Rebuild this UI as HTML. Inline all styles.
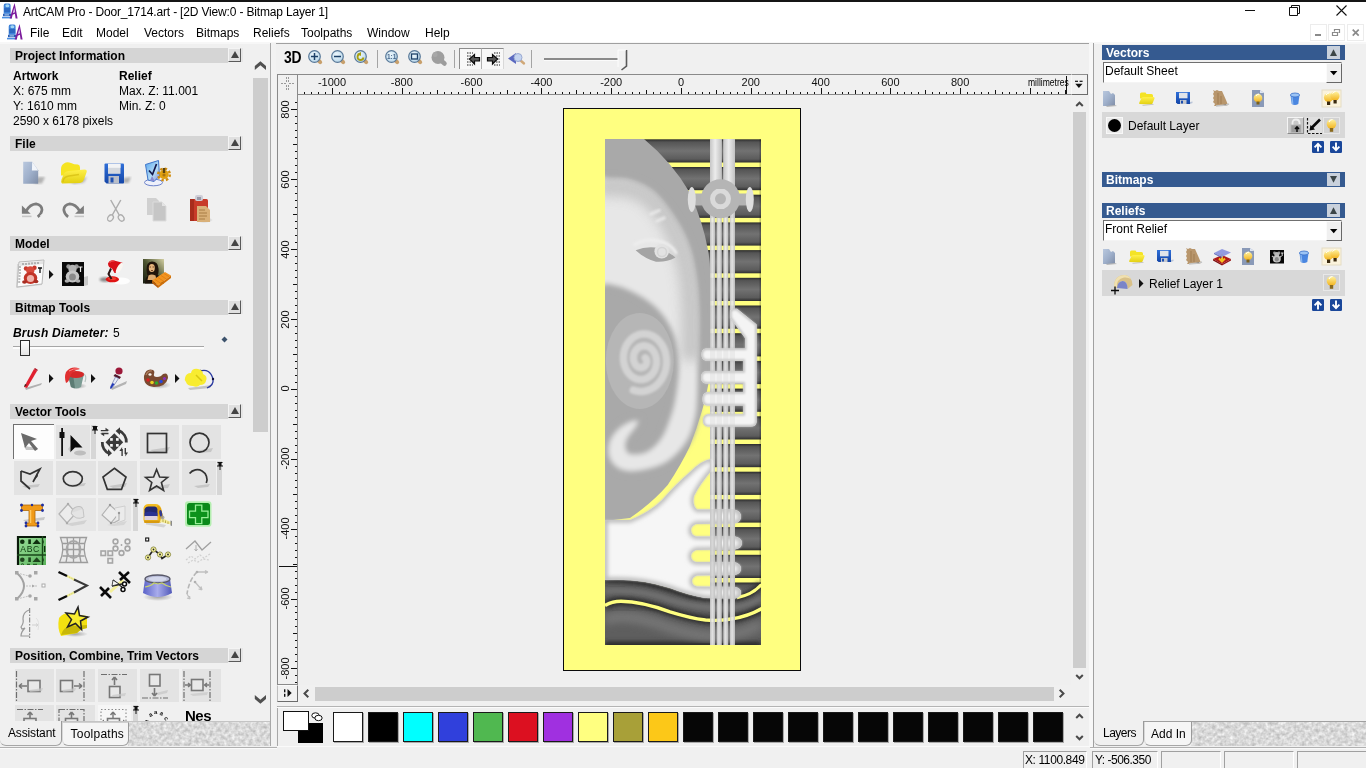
<!DOCTYPE html>
<html><head><meta charset="utf-8"><title>ArtCAM Pro</title>
<style>
*{box-sizing:border-box;margin:0;padding:0}
html,body{width:1366px;height:768px;overflow:hidden;background:#f0f0f0;font-family:"Liberation Sans",sans-serif;font-size:12px;color:#000}
.a{position:absolute}
.t{position:absolute;white-space:nowrap;line-height:14px}
.b{font-weight:bold}
.hd{position:absolute;left:10px;width:218px;height:15px;background:#d5d5d5}
.hd span{position:absolute;left:5px;top:1px;line-height:15px;font-weight:bold;font-size:12px;white-space:nowrap}
.hb{position:absolute;left:228px;width:13px;height:14px;background:#e0e0e0;border-right:1.5px solid #5a5a5a;border-bottom:1.5px solid #5a5a5a;border-top:1px solid #f4f4f4;border-left:1px solid #f4f4f4;box-shadow:2px 0 0 #e6e6e6}
.hb:after{content:"";position:absolute;left:1.5px;top:2px;border-left:4px solid transparent;border-right:4px solid transparent;border-bottom:7px solid #444}
.rh{position:absolute;left:1102px;width:243px;height:15px;background:#355a90}
.rh span{position:absolute;left:4px;top:1px;line-height:15px;font-weight:bold;color:#fff;white-space:nowrap}
.rb{position:absolute;left:1327px;width:13px;height:13px;background:#c9d1dc}
.sw{position:absolute;top:712px;width:30px;height:30px;border:1px solid #1a1a1a;box-shadow:1px 1px 0 #aaa}
.m{position:absolute;top:0}
svg{position:absolute;overflow:visible}
.rl{position:absolute;font-size:11px;line-height:11px;white-space:nowrap;color:#111}
#root{position:absolute;left:0;top:0;width:1366px;height:768px;will-change:transform;overflow:hidden}
</style></head><body><div id="root">
<!-- top strip, title, menu -->
<div class="a" style="left:0;top:0;width:1366px;height:2px;background:#151515"></div>
<div class="a" style="left:0;top:2px;width:1366px;height:40px;background:#fff"></div>
<div class="t" id="title" style="left:23px;top:5px;font-size:12px;letter-spacing:-0.17px">ArtCAM Pro - Door_1714.art - [2D View:0 - Bitmap Layer 1]</div>
<div class="t" style="left:0;top:26px;font-size:12px" id="menu"><span class="m" style="left:30px">File</span><span class="m" style="left:62px">Edit</span><span class="m" style="left:96px">Model</span><span class="m" style="left:144px">Vectors</span><span class="m" style="left:196px">Bitmaps</span><span class="m" style="left:253px">Reliefs</span><span class="m" style="left:301px">Toolpaths</span><span class="m" style="left:367px">Window</span><span class="m" style="left:425px">Help</span></div>
<div class="a" style="left:0;top:42px;width:1366px;height:2px;background:#f7f7f7"></div>
<svg width="0" height="0"><defs><g id="appico"><path d="M3.300 0.500h3.700q1.600 0 1.600 2v8.300H1.700V2.500q0-2 1.600-2z" fill="#3c82d8"/><path d="M2.200 5h6v4h-6z" fill="#2c68c0"/><ellipse cx="5.400" cy="2.800" rx="2" ry="1.500" fill="#a4d8f4"/><rect x="1" y="10.800" width="8" height="2.400" fill="#2a5cb4"/><rect x="2.500" y="11.300" width="4.500" height="1.200" fill="#9cc4ec"/><rect x="0" y="13.800" width="10" height="1.600" fill="#4a8ee0"/><path d="M12.600 0L15.600 15.600H13.600L12.900 10.800 10.700 11.800 9.700 15.600H7.600z" fill="#7c1c9c"/><path d="M12.300 4.500l.5 4.800-1.700.8z" fill="#fff"/></g></defs></svg>
<svg style="left:2px;top:3px" width="16" height="16"><g><path d="M3.300 0.500h3.700q1.600 0 1.600 2v8.300H1.700V2.500q0-2 1.600-2z" fill="#3c82d8"/><path d="M2.200 5h6v4h-6z" fill="#2c68c0"/><ellipse cx="5.400" cy="2.800" rx="2" ry="1.500" fill="#a4d8f4"/><rect x="1" y="10.800" width="8" height="2.400" fill="#2a5cb4"/><rect x="2.500" y="11.300" width="4.500" height="1.200" fill="#9cc4ec"/><rect x="0" y="13.800" width="10" height="1.600" fill="#4a8ee0"/><path d="M12.600 0L15.600 15.600H13.600L12.900 10.800 10.700 11.800 9.700 15.600H7.600z" fill="#7c1c9c"/><path d="M12.300 4.500l.5 4.800-1.700.8z" fill="#fff"/></g></svg>
<svg style="left:7px;top:24px" width="16" height="16"><g><path d="M3.300 0.500h3.700q1.600 0 1.600 2v8.300H1.700V2.500q0-2 1.600-2z" fill="#3c82d8"/><path d="M2.200 5h6v4h-6z" fill="#2c68c0"/><ellipse cx="5.400" cy="2.800" rx="2" ry="1.500" fill="#a4d8f4"/><rect x="1" y="10.800" width="8" height="2.400" fill="#2a5cb4"/><rect x="2.500" y="11.300" width="4.500" height="1.200" fill="#9cc4ec"/><rect x="0" y="13.800" width="10" height="1.600" fill="#4a8ee0"/><path d="M12.600 0L15.600 15.600H13.600L12.900 10.800 10.700 11.800 9.700 15.600H7.600z" fill="#7c1c9c"/><path d="M12.300 4.500l.5 4.800-1.700.8z" fill="#fff"/></g></svg>
<!-- LEFT PANEL -->
<div class="a" style="left:270px;top:43px;width:1px;height:703px;background:#a8a8a8"></div>
<div class="a" style="left:271px;top:43px;width:5px;height:703px;background:#f2f2f2"></div>
<div class="a" style="left:253px;top:78px;width:15px;height:354px;background:#cdcdcd"></div>
<div class="hd" style="top:48px"><span>Project Information</span></div><div class="hb" style="top:48px"></div>
<div class="hd" style="top:136px"><span>File</span></div><div class="hb" style="top:136px"></div>
<div class="hd" style="top:236px"><span>Model</span></div><div class="hb" style="top:236px"></div>
<div class="hd" style="top:300px"><span>Bitmap Tools</span></div><div class="hb" style="top:300px"></div>
<div class="hd" style="top:404px"><span>Vector Tools</span></div><div class="hb" style="top:404px"></div>
<div class="hd" style="top:648px"><span>Position, Combine, Trim Vectors</span></div><div class="hb" style="top:648px"></div>
<div class="t b" style="left:13px;top:69px">Artwork</div>
<div class="t" style="left:13px;top:84px">X: 675 mm</div>
<div class="t" style="left:13px;top:99px">Y: 1610 mm</div>
<div class="t" style="left:13px;top:114px">2590 x 6178 pixels</div>
<div class="t b" style="left:119px;top:69px">Relief</div>
<div class="t" style="left:119px;top:84px">Max. Z: 11.001</div>
<div class="t" style="left:119px;top:99px">Min. Z: 0</div>
<div class="t b" style="left:13px;top:326px;font-style:italic;letter-spacing:0.15px">Brush Diameter:</div>
<div class="t" style="left:113px;top:326px">5</div>
<svg width="0" height="0"><defs>
<linearGradient id="gDoc" x1="0" y1="0" x2="1" y2="1"><stop offset="0" stop-color="#b9c8de"/><stop offset="0.5" stop-color="#9fb0cb"/><stop offset="1" stop-color="#7f8da6"/></linearGradient>
<linearGradient id="gFold" x1="0" y1="0" x2="0" y2="1"><stop offset="0" stop-color="#fff04a"/><stop offset="1" stop-color="#e2cf10"/></linearGradient>
<linearGradient id="gFlop" x1="0" y1="0" x2="0" y2="1"><stop offset="0" stop-color="#2f6fd8"/><stop offset="1" stop-color="#1446a8"/></linearGradient>
<linearGradient id="gMon" x1="0" y1="0" x2="1" y2="1"><stop offset="0" stop-color="#5aa8ee"/><stop offset="0.6" stop-color="#b6dcf6"/><stop offset="1" stop-color="#8a8ad0"/></linearGradient>
<radialGradient id="gSh"><stop offset="0" stop-color="#000" stop-opacity=".32"/><stop offset="1" stop-color="#000" stop-opacity="0"/></radialGradient>
<linearGradient id="gBulb" x1="0" y1="0" x2="0" y2="1"><stop offset="0" stop-color="#fff3a0"/><stop offset="1" stop-color="#f2b21c"/></linearGradient>
<filter id="fb1"><feGaussianBlur stdDeviation="0.8"/></filter>
</defs></svg>
<!-- new -->
<svg style="left:22px;top:161px" width="24" height="26"><path d="M16 16l7 0-3 6.500-8 0z" fill="#a4a4a4" opacity=".8" filter="url(#fb1)"/><path d="M1.200 0.700h9l6 8.500v13.500h-15z" fill="url(#gDoc)"/><path d="M10.200 0.700l6 8.800h-6.300z" fill="#f2f5fa"/></svg>
<!-- open -->
<svg style="left:60px;top:161px" width="30" height="26"><path d="M10 21l17-5-3 5.500-10 1.500z" fill="#a8a8a8" opacity=".8" filter="url(#fb1)"/><path d="M1 8q0-4 3-5.500q3-2 7-.5q3 1.500 7 1.500q2 .5 2 3v8H1z" fill="#f6e422"/><path d="M2 22.500q-1.500-1-.5-4l2-5q1-3 5-3.500l16-1.500q3 0 2 3l-2.500 7q-1 3-4 3.500z" fill="url(#gFold)"/><path d="M3 21q0-5 6-6l10-1.500" fill="none" stroke="#d4bc10" stroke-width="1.500" opacity=".7"/></svg>
<!-- save -->
<svg style="left:104px;top:163px" width="28" height="24"><path d="M20 15l7-1-2.500 6-6 0z" fill="#a0a0a0" opacity=".8" filter="url(#fb1)"/><path d="M0.500 1.500q0-1 1-1h17.500q1 0 1 1v18q0 1-1 1H2.500l-2-2z" fill="url(#gFlop)"/><rect x="4" y="0.800" width="12.500" height="10" fill="#d4d8de"/><rect x="4" y="0.800" width="12.500" height="4" fill="#f2f3f5"/><rect x="4.500" y="13" width="10.500" height="7.500" fill="#b9bec8"/><rect x="6.500" y="14.500" width="3" height="5" fill="#2050b0"/></svg>
<!-- options (monitor+gear) -->
<svg style="left:143px;top:159px" width="32" height="30"><ellipse cx="10.500" cy="23.500" rx="9" ry="3.300" fill="#eef0fa" stroke="#6a80c8" stroke-width="1"/><path d="M2.500 5.500L15.500 1.500 16.500 17 11 22.500 5 21z" fill="url(#gMon)" stroke="#3f74c8" stroke-width="1"/><path d="M9 17l3 5.500-5-1z" fill="#8888d0"/><path d="M6 11.500l3.500 4L13.500 5" fill="none" stroke="#14184a" stroke-width="1.700"/><circle cx="21" cy="15.500" r="4.600" fill="#e0a010"/><circle cx="21" cy="15.500" r="5.800" fill="none" stroke="#d08c0c" stroke-width="2.400" stroke-dasharray="2.400 2.150"/><path d="M19.800 9h2.400v5h-2.400z" fill="#5a4410"/><circle cx="21" cy="16" r="1.600" fill="#a87410"/></svg>
<!-- undo -->
<svg style="left:20px;top:201px" width="26" height="20"><path d="M1.900 4.400V12.800H10.700z" fill="#7c7c7c"/><path d="M6.500 9.500Q10 3.200 16 2.800Q21.800 3.800 22 8.800Q21.500 13 17.700 15.800" fill="none" stroke="#7c7c7c" stroke-width="2.700"/><path d="M2 15.400h9.500" stroke="#c6c6c6" stroke-width="1.600"/><path d="M20 15l3-3" stroke="#d0d0d0" stroke-width="1"/></svg>
<!-- redo -->
<svg style="left:62px;top:201px" width="26" height="20"><path d="M21.900 4.400V12.800H13.100z" fill="#7c7c7c"/><path d="M17.300 9.500Q13.800 3.200 7.800 2.800Q2 3.800 1.800 8.800Q2.300 13 6.100 15.800" fill="none" stroke="#7c7c7c" stroke-width="2.700"/><path d="M12.500 15.400h9.500" stroke="#c6c6c6" stroke-width="1.600"/></svg>
<!-- cut -->
<svg style="left:105px;top:198px" width="22" height="25"><path d="M5.700 2l8.500 15M15.800 2L7.300 17" stroke="#adadad" stroke-width="1.500" fill="none"/><ellipse cx="5.500" cy="20" rx="2.600" ry="3.400" fill="none" stroke="#adadad" stroke-width="1.300" transform="rotate(35 5.500 20)"/><ellipse cx="16.200" cy="20" rx="2.600" ry="3.400" fill="none" stroke="#adadad" stroke-width="1.300" transform="rotate(-35 16.200 20)"/></svg>
<!-- copy -->
<svg style="left:145px;top:197px" width="27" height="27"><path d="M2 1h9l3 3v14H2z" fill="#d0d0d0"/><path d="M8 5h9l4 4v15H8z" fill="#c6c6c6" stroke="#dcdcdc" stroke-width="1"/><path d="M17 5l4 4h-4z" fill="#e4e4e4"/></svg>
<!-- paste -->
<svg style="left:188px;top:194px" width="26" height="30"><ellipse cx="16" cy="26" rx="9" ry="3" fill="url(#gSh)"/><rect x="2" y="5" width="18" height="22" rx="1.5" fill="#c83a28"/><rect x="2" y="5" width="4" height="22" fill="#a82c1c"/><rect x="7" y="1" width="8" height="6" rx="2" fill="#cfcfd8"/><rect x="9" y="3" width="4" height="3" fill="#9a9aa8"/><path d="M9 12h9l4 4v12H9z" fill="#d9b078"/><path d="M11 16h6M11 19h8M11 22h8M11 25h6" stroke="#a87c44" stroke-width="1"/></svg>
<!-- model: teddy paper -->
<svg style="left:14px;top:258px" width="32" height="31"><path d="M3 6l27-3-2 24-26 3z" fill="#d8d8d8"/><path d="M5 4l25-2-2 24-25 3z" fill="#fbfbfb" stroke="#b8b8b8" stroke-width="1"/><path d="M6 5l23-2v3L6 8z" fill="#e4e4e4"/><path d="M9 5v2M12 5v2M15 4.7v2M18 4.4v2M21 4.2v2M24 4v2" stroke="#666" stroke-width="0.8"/><path d="M5 9l2 0M5 12h2M5 15h2M4.6 18h2M4.4 21h2M4.2 24h2" stroke="#666" stroke-width="0.8"/><circle cx="12" cy="10.5" r="2.2" fill="#c8382c"/><circle cx="20.5" cy="9.8" r="2.2" fill="#c8382c"/><circle cx="16.3" cy="12.5" r="4.2" fill="#d84a3c"/><ellipse cx="16.5" cy="20" rx="6.8" ry="6" fill="#c23428"/><ellipse cx="16.5" cy="20.5" rx="3.6" ry="3.6" fill="#f0b4ac"/><ellipse cx="10.5" cy="24" rx="2.4" ry="1.8" fill="#a82c20"/><ellipse cx="22" cy="23.5" rx="2.4" ry="1.8" fill="#a82c20"/><path d="M24 10h4M26 10v5" stroke="#111" stroke-width="1.3"/></svg>
<svg style="left:49px;top:270px" width="5" height="9"><path d="M0 0l4.5 4.5L0 9z" fill="#111"/></svg>
<!-- grey teddy on black -->
<svg style="left:62px;top:261px" width="26" height="26"><path d="M22 16l4-1v9l-4 1z" fill="#c8c8c8"/><rect x="0" y="1" width="22" height="24" fill="#0a0a0a"/><circle cx="6.5" cy="5.5" r="2.2" fill="#9a9a9a"/><circle cx="14.5" cy="5.5" r="2.2" fill="#9a9a9a"/><circle cx="10.5" cy="8" r="4.2" fill="#b4b4b4"/><ellipse cx="10.5" cy="15.5" rx="6.8" ry="6" fill="#c6c6c6"/><ellipse cx="10.5" cy="16" rx="3.4" ry="3.6" fill="#8a8a8a"/><ellipse cx="5" cy="20" rx="2.4" ry="1.8" fill="#b0b0b0"/><ellipse cx="16" cy="20" rx="2.4" ry="1.8" fill="#b0b0b0"/><path d="M16.5 6h4M18.5 6v5" stroke="#eee" stroke-width="1.2"/></svg>
<!-- lamp -->
<svg style="left:99px;top:259px" width="32" height="28"><ellipse cx="22" cy="22" rx="9" ry="3.500" fill="#fff" opacity=".85"/><ellipse cx="6" cy="20.500" rx="5.500" ry="2.200" fill="#555" filter="url(#fb1)" opacity=".7"/><ellipse cx="13.400" cy="20.300" rx="6.600" ry="3" fill="#e01414"/><ellipse cx="13" cy="19.500" rx="4" ry="1.500" fill="#f04030"/><path d="M12 9.500L9.500 15l3 5" fill="none" stroke="#2a1414" stroke-width="2"/><path d="M9 4.500q2-4 6-3l8.500 2.200-3 6.300q-2.500 4.500-5 4L13 9.500q-4-1-4-5z" fill="#d81018"/><path d="M23.300 3.800q1.500 2-1 6.500-2.500 4.500-5 4-1.500-1.500 1-6t5-4.500z" fill="#fbf6f0"/><path d="M10.500 3.500q2-2 5-1.500" stroke="#f05050" stroke-width="1.200" fill="none"/></svg>
<!-- mona lisa -->
<svg style="left:142px;top:258px" width="30" height="31"><defs><linearGradient id="gMona" x1="0" y1="1" x2="1" y2="0"><stop offset="0" stop-color="#181c10"/><stop offset=".5" stop-color="#4c5430"/><stop offset="1" stop-color="#d4d0a4"/></linearGradient></defs><rect x="1" y="1" width="21" height="24.500" fill="url(#gMona)"/><path d="M3 25.500q0-7 5-9.500h6q5 2 6 9.500z" fill="#1c140c"/><path d="M4.500 12q-.5-8 5.500-8.500 6 0 6.500 7 .5 5-1.500 7.500h-9q-1.500-2-1.500-6z" fill="#20140a"/><ellipse cx="9.800" cy="10" rx="3" ry="4" fill="#e4b47c"/><path d="M7.500 9h1.500M10.500 9h1.500M9 12.500h2" stroke="#5a3018" stroke-width=".8"/><path d="M6.500 17.500q3-2 7 0l1 4.500h-9z" fill="#dcaa70"/><path d="M10 22.500l13-8.500 6 3.500-13 10z" fill="#f29420"/><path d="M10 22.500l6 5v2.500l-6-5z" fill="#b85c08"/><path d="M16 27.500l13-10v2.500l-13 10z" fill="#d07008"/><path d="M13 21.500l6 4M16 19.500l6 4M19 17.500l6 4M22 15.500l5.500 3.500" stroke="#e07c10" stroke-width=".8"/></svg>
<!-- brush slider -->
<div class="a" style="left:13px;top:346px;width:191px;height:1px;background:#a6a6a6"></div>
<div class="a" style="left:13px;top:347px;width:191px;height:2px;background:#fdfdfd"></div>
<div class="a" style="left:20px;top:340px;width:10px;height:16px;background:linear-gradient(#fff,#e4e4e4);border:1px solid #2c2c2c"></div>
<svg style="left:221px;top:336px" width="7" height="7"><path d="M3.5 0.5l3 3-3 3-3-3z" fill="#3c526c"/></svg>
<!-- pencil -->
<svg style="left:22px;top:367px" width="24" height="24"><path d="M3 21l17-5-1 2-15 5z" fill="#b0b0b0"/><path d="M2 20l10-18 3 2L5 21z" fill="#e02030"/><path d="M2 20l1-3 2 1z" fill="#402018"/><path d="M12 2l1-1 3 2-1 1z" fill="#b01020"/></svg>
<svg style="left:49px;top:374px" width="5" height="9"><path d="M0 0l4.500 4.500L0 9z" fill="#111"/></svg>
<!-- bucket -->
<svg style="left:62px;top:366px" width="26" height="25"><ellipse cx="16" cy="20" rx="9" ry="3" fill="url(#gSh)"/><path d="M6 9l3 12q5 3 10 0l3-13z" fill="#7c9c94"/><path d="M6 9l3 12q2 1 4 1.300L11 8z" fill="#5c7c74"/><ellipse cx="14" cy="8.500" rx="8.200" ry="3.400" fill="#d42828"/><path d="M4 6q6-7 14-3q-8 1-10 8q-1 5-4 6q-2-6 0-11z" fill="#e03030"/><path d="M7 5q5-3 9-2" stroke="#f88" stroke-width="1" fill="none"/><path d="M22 8q3 2 1 8" stroke="#b8c4c0" stroke-width="1.200" fill="none"/></svg>
<svg style="left:91px;top:374px" width="5" height="9"><path d="M0 0l4.500 4.500L0 9z" fill="#111"/></svg>
<!-- dropper -->
<svg style="left:105px;top:366px" width="26" height="26"><path d="M6 22l16-7-1 3-14 6z" fill="#b4b4b4"/><circle cx="14" cy="5" r="3.600" fill="#9c1838"/><path d="M10 8l6 3-1.500 2-6-3z" fill="#50182c"/><path d="M10.500 11l3 1.500-6 9-2 1 .2-2z" fill="#e8ecf8" stroke="#7884b0" stroke-width=".8"/><path d="M7.500 17l2 1-2.800 4-1.500.7.200-1.700z" fill="#2038b8"/></svg>
<!-- palette -->
<svg style="left:142px;top:367px" width="30" height="24"><ellipse cx="17" cy="18" rx="12" ry="4" fill="url(#gSh)"/><path d="M2 9q2-8 9-6q2 1 1 4q-1 3 3 3q4 0 6-3q5-2 5 4q-2 9-14 9q-11-1-10-11z" fill="#7a4a30"/><path d="M4 8q2-5 6-4" stroke="#b08060" stroke-width="1.200" fill="none"/><circle cx="6" cy="13" r="1.800" fill="#d82020"/><circle cx="10" cy="15.500" r="1.800" fill="#e8d020"/><circle cx="14.500" cy="16" r="1.800" fill="#30a830"/><circle cx="19" cy="14.500" r="1.800" fill="#2848d8"/><circle cx="22.500" cy="11.500" r="1.600" fill="#8830c0"/><ellipse cx="8" cy="7.500" rx="1.600" ry="1.200" fill="#f4f0e8"/></svg>
<svg style="left:175px;top:374px" width="5" height="9"><path d="M0 0l4.500 4.500L0 9z" fill="#111"/></svg>
<!-- yellow blob + curve -->
<svg style="left:184px;top:366px" width="32" height="26"><path d="M4 22l24-3-2 3-20 2z" fill="#c4c4c4"/><path d="M16 5q10-3 13 8q1 6-6 9" fill="none" stroke="#2838a0" stroke-width="1.300"/><circle cx="16.500" cy="5" r="1.200" fill="#101040"/><circle cx="29" cy="13" r="1.200" fill="#101040"/><path d="M1 12q1-5 6-5q1-5 7-4q5 1 5 5q5 2 3 7q-1 4-6 4q-3 3-7 1q-6 0-7-4q-2-2-1-4z" fill="#f8ec30"/><path d="M12 9l6 6" stroke="#d8c810" stroke-width="1.500"/></svg>
<style>.c{position:absolute;background:#e3e3e3}.ps{position:absolute;background:#d6d6d6;width:5px}</style>
<!-- Vector tools row1 cells -->
<div class="a" style="left:13px;top:424px;width:41px;height:35px;background:#fdfdfd;border-top:1px solid #707070;border-left:1px solid #707070"></div>
<div class="c" style="left:56px;top:425px;width:34px;height:34px"></div><div class="ps" style="left:91px;top:425px;height:34px"></div>
<div class="c" style="left:140px;top:425px;width:39px;height:34px"></div>
<div class="c" style="left:182px;top:425px;width:39px;height:34px"></div>
<!-- row2 cells -->
<div class="c" style="left:14px;top:461px;width:39px;height:34px"></div>
<div class="c" style="left:56px;top:461px;width:40px;height:34px"></div>
<div class="c" style="left:98px;top:461px;width:39px;height:34px"></div>
<div class="c" style="left:140px;top:461px;width:39px;height:34px"></div>
<div class="c" style="left:182px;top:461px;width:34px;height:34px"></div><div class="ps" style="left:217px;top:461px;height:34px"></div>
<!-- row3 cells -->
<div class="c" style="left:56px;top:498px;width:40px;height:33px;background:#e6e6e6"></div>
<div class="c" style="left:98px;top:498px;width:33px;height:33px;background:#e6e6e6"></div><div class="ps" style="left:133px;top:498px;height:33px"></div>
<!-- pins -->
<svg style="left:92px;top:426px" width="6" height="8"><path d="M0.500 0.500h5M1.500 0.500v3h3v-3M0 4h6M3 4v4" stroke="#111" stroke-width="1" fill="none"/><rect x="1.500" y="0.500" width="3" height="3.500" fill="#111"/></svg>
<svg style="left:217px;top:462px" width="6" height="8"><rect x="1.500" y="0.500" width="3" height="3.500" fill="#111"/><path d="M0.500 0.500h5M0 4h6M3 4v4" stroke="#111" stroke-width="1" fill="none"/></svg>
<svg style="left:133px;top:499px" width="6" height="8"><rect x="1.500" y="0.500" width="3" height="3.500" fill="#111"/><path d="M0.500 0.500h5M0 4h6M3 4v4" stroke="#111" stroke-width="1" fill="none"/></svg>
<!-- select arrow -->
<svg style="left:18px;top:430px" width="26" height="24"><path d="M6 16l14 2-2 2-10 0z" fill="#c4c4c4"/><path d="M3 3l16 6-6 2 7 8-3 2-6-8-4 5z" fill="#6a6a6a"/></svg>
<!-- node edit -->
<svg style="left:58px;top:427px" width="32" height="30"><ellipse cx="22" cy="26" rx="6" ry="2.500" fill="#bdbdbd"/><path d="M10 22l3-4v8" fill="#c8c8c8"/><rect x="3.200" y="1" width="1.800" height="28" fill="#111"/><rect x="1.500" y="5" width="5" height="6" fill="#111"/><path d="M12.500 8v17l4.500-4.500 7.500 0z" fill="#0a0a0a"/></svg>
<!-- transform -->
<svg style="left:99px;top:427px" width="30" height="30"><g fill="#3a3a3a"><path d="M6.500 15.300L15.300 6.200 24.200 15.300 15.300 24.400z"/><path d="M16.600 4.100L21 0.200V8z"/><path d="M13 26.300L9 22.100V29.400z"/><path d="M6.500 0.800L10.500 3.500H6.500z"/><path d="M5.200 9.200L1.200 6.500H5.200z"/><path d="M23.100 20l-2.700 4h2.700z"/><path d="M26.300 29.500l2.700-4h-2.700z"/></g><g fill="none" stroke="#3a3a3a"><path d="M20 3.600A12 12 0 0 1 27.300 15.500" stroke-width="2.800"/><path d="M10.500 26.800A12 12 0 0 1 3.300 15" stroke-width="2.800"/><path d="M1.800 3.600H9M9.500 6.500H2.500" stroke-width="1.400"/><path d="M23.100 29V22M26.300 21V27" stroke-width="1.400"/></g><g fill="#f4f4f4"><rect x="11.100" y="11.100" width="2.700" height="2.700"/><rect x="17" y="11.100" width="2.700" height="2.700"/><rect x="11.100" y="17" width="2.700" height="2.700"/><rect x="17" y="17" width="2.700" height="2.700"/></g></svg>
<!-- rect -->
<svg style="left:144px;top:430px" width="30" height="26"><path d="M6 20l20-3-2 4-14 1z" fill="#c6c6c6"/><rect x="3.500" y="3.500" width="19" height="19" fill="none" stroke="#333" stroke-width="1.700"/></svg>
<!-- circle -->
<svg style="left:186px;top:430px" width="30" height="26"><path d="M8 21l19-3-2 4-12 1z" fill="#c6c6c6"/><circle cx="13.500" cy="12.600" r="9.500" fill="none" stroke="#333" stroke-width="1.700"/></svg>
<!-- polyline -->
<svg style="left:18px;top:465px" width="30" height="28"><path d="M4 21l18-2-2 3-12 1z" fill="#c6c6c6"/><path d="M3 6v10l9 8M3 6l9 3 10-5-7 13" fill="none" stroke="#333" stroke-width="1.700"/><path d="M15 17l5-6-1-3z" fill="#333"/></svg>
<!-- ellipse -->
<svg style="left:60px;top:468px" width="30" height="24"><path d="M8 17l18-2-2 3-12 1z" fill="#c6c6c6"/><ellipse cx="12.800" cy="10.800" rx="9.500" ry="7.200" fill="none" stroke="#333" stroke-width="1.700"/></svg>
<!-- pentagon -->
<svg style="left:101px;top:466px" width="30" height="26"><path d="M8 20l18-3-2 4-12 1z" fill="#c6c6c6"/><path d="M13.400 2.300L25 11 20.500 23.300H6.300L2 11z" fill="none" stroke="#333" stroke-width="1.700"/></svg>
<!-- star -->
<svg style="left:144px;top:467px" width="30" height="26"><path d="M8 20l18-3-2 4-12 1z" fill="#c6c6c6"/><path d="M12.600 2.500l3 7.500 8 .5-6.200 5 2.200 8-7-4.500-7 4.500 2.200-8-6.200-5 8-.5z" fill="none" stroke="#333" stroke-width="1.600"/></svg>
<!-- arc -->
<svg style="left:186px;top:467px" width="30" height="26"><path d="M8 19l16-2-2 3-10 1z" fill="#c6c6c6"/><path d="M3.600 6.500A9.700 9.700 0 0 1 20.300 16" fill="none" stroke="#333" stroke-width="1.700"/></svg>
<!-- row3: T -->
<svg style="left:19px;top:502px" width="28" height="26"><path d="M4 18l22-3-1 3-18 2z" fill="#c8c8c8"/><path d="M2.500 3h21v5.500h-7.500v12.500h3v3h-12v-3h3V8.500H2.500z" fill="#f09a18" stroke="#b06808" stroke-width=".8"/><path d="M11.500 8v13" stroke="#ffc860" stroke-width="1.500"/><g fill="#2030a0"><circle cx="2.500" cy="3" r="1.500"/><circle cx="23.500" cy="3" r="1.500"/><circle cx="2.500" cy="8.500" r="1.400"/><circle cx="23.500" cy="8.500" r="1.400"/><circle cx="7" cy="21" r="1.400"/><circle cx="19" cy="21" r="1.400"/><circle cx="7" cy="24" r="1.400"/><circle cx="19" cy="24" r="1.400"/><circle cx="13" cy="3" r="1.200"/></g></svg>
<!-- disabled fill 1 -->
<svg style="left:57px;top:500px" width="38" height="30"><path d="M8 24l22-4-3 4-12 2z" fill="#d2d2d2"/><path d="M2 14l9-10 8 9-9 10z" fill="#ececec" stroke="#b4b4b4" stroke-width="1.200"/><ellipse cx="20" cy="11" rx="6" ry="4" transform="rotate(-30 20 11)" fill="#dcdcdc" stroke="#c0c0c0"/><path d="M14 13q5 8 13 4l-1-8" fill="#e4e4e4" stroke="#c4c4c4"/><circle cx="11" cy="4" r="1.200" fill="#aaa"/><circle cx="10" cy="23" r="1.200" fill="#aaa"/></svg>
<!-- disabled fill 2 -->
<svg style="left:99px;top:500px" width="34" height="30"><path d="M8 25l20-4-3 4-10 1z" fill="#d6d6d6"/><path d="M3 15l8-10 9 8-8 10z" fill="#ededed" stroke="#b0b0b0" stroke-width="1.200"/><path d="M16 8l10-2v14l-8 3" fill="#ebebeb" stroke="#cfcfcf"/><path d="M20 13v7q-4 3-8 3" fill="none" stroke="#b4b4b4" stroke-width="1.200"/><circle cx="11" cy="5" r="1.200" fill="#999"/><circle cx="20" cy="13" r="1.200" fill="#999"/><circle cx="12" cy="23" r="1.200" fill="#999"/></svg>
<!-- tape measure -->
<svg style="left:142px;top:502px" width="32" height="26"><path d="M4 19l20 4-2 2.500-18-3z" fill="#c0c0c0" opacity=".6"/><path d="M1.500 6q1-4 5-4h7q4 0 5.500 4l2 9v4l-3 1.500H2.500L1.500 18z" fill="#f2bc22"/><path d="M15 3.500q3 .5 4 3l2 8.500v4l-3 1.500z" fill="#e0a010"/><path d="M2.500 7.500q1-3 4-3h6q2.500 0 3 3v7h-13z" fill="#222870"/><path d="M2.500 11q4-3 13 0v3.500h-13z" fill="#2c34a0" opacity=".7"/><rect x="2.500" y="14" width="13" height="4" fill="#dcd0e0"/><ellipse cx="18.800" cy="11.500" rx="1.400" ry="3.500" fill="#303890" transform="rotate(-8 18.800 11.500)"/><path d="M2 18.500h15.500v2.500H2.500z" fill="#d89a10"/><path d="M19 15.500l10 4.500v2.500l-11-2.500z" fill="#f6ec98"/><path d="M21 17.500v2.500M23.500 18.500v2.500M26 19.500v2.500" stroke="#a09030" stroke-width=".7"/><path d="M28.500 18.500l1.500.5v5l-1.500-.5z" fill="#8a8a8a"/><circle cx="20.500" cy="15.500" r="2" fill="#9a9a9a" opacity=".8"/></svg>
<!-- green cross -->
<svg style="left:184px;top:500px" width="30" height="28"><rect x="1" y="1.300" width="26.500" height="25.500" rx="3" fill="#b4eeb0"/><rect x="3" y="3" width="23" height="22" rx="2.500" fill="#0a8a1a"/><path d="M11.500 5.200h6.300v6h6.200v6.500h-6.200v6H11.500v-6H5.500v-6.500h6z" fill="#0c921c" stroke="#98f098" stroke-width="1.300"/></svg>
<!-- row4: ABC grid -->
<svg style="left:17px;top:536px" width="29" height="29"><defs><linearGradient id="gAbc" x1="0" y1="0" x2="1" y2="1"><stop offset="0" stop-color="#9ade9a"/><stop offset="1" stop-color="#5cb45c"/></linearGradient></defs><rect width="29" height="29" fill="url(#gAbc)"/><path d="M0 1h29M1 0v29" stroke="#0a1a0a" stroke-width="2.200"/><path d="M0 19h29M25.500 0v29" stroke="#184818" stroke-width="1.400"/><g fill="#10300f"><circle cx="5.300" cy="5.700" r="2.300"/><rect x="11.300" y="3.400" width="2.600" height="4.600"/><path d="M15.500 8l4.200-4.800 4.200 4.800z"/><circle cx="5.300" cy="23.700" r="2.300" opacity=".85"/><rect x="11.300" y="21.400" width="2.600" height="4.600" opacity=".85"/><path d="M15.500 26l4.200-4.800 4.200 4.800z" opacity=".85"/><path d="M27 3.400q-1.500 2.300 0 4.600zM27 21.500q-1.500 2.300 0 4.600z"/><rect x="27" y="10" width="1.300" height="6"/></g><text x="3.300" y="16" font-family="Liberation Sans" font-size="8.600" fill="#0f3a0f" textLength="19">ABC</text><path d="M4 28.500q1-1.500 3 0M10 28.300h3M16 28.300h4" stroke="#184818" stroke-width="1" fill="none"/></svg>
<!-- grid globe -->
<svg style="left:59px;top:536px" width="30" height="29"><path d="M1.500 1.500h26q-5 12 1 25h-28q6-13 1-25z" fill="#e9e9e9"/><g fill="none" stroke="#9c9c9c" stroke-width="1.300"><path d="M1.500 1.500h26q-5 12 1 25h-28q6-13 1-25z"/><path d="M8 1.500q2 12-1 25M14.500 1.500v25M21 1.500q-2 12 1 25M3 7.500h23M4 13.500h21M3.500 20h22"/><ellipse cx="14.500" cy="13.500" rx="7" ry="8.500" stroke-width="1.800" stroke="#a8a8a8"/></g></svg>
<!-- squares/circles -->
<svg style="left:100px;top:538px" width="32" height="28"><g fill="none" stroke="#a6a6a6" stroke-width="1.600"><rect x="1" y="13" width="4.500" height="4.500"/><rect x="8" y="13" width="4.500" height="4.500"/><rect x="8" y="20.500" width="4.500" height="4.500"/><circle cx="15.500" cy="3.500" r="2.400"/><circle cx="27.500" cy="3.500" r="2.400"/><circle cx="15.500" cy="10.500" r="2.400"/><circle cx="27.500" cy="10.500" r="2.400"/><circle cx="21.500" cy="15" r="2.400"/></g><circle cx="21.500" cy="7" r=".9" fill="#a6a6a6"/></svg>
<!-- node polyline -->
<svg style="left:144px;top:537px" width="28" height="26"><rect x="1.700" y="1" width="3" height="3" fill="#fff" stroke="#111" stroke-width="1.100"/><path d="M4 20.500l5.500-8 6.500 5 2 4 6-4" fill="none" stroke="#222" stroke-width="1.600"/><g fill="#f8f4a0" stroke="#7a7a30" stroke-width=".8"><circle cx="4" cy="20.500" r="2.600"/><circle cx="9.500" cy="12.500" r="2.600"/><circle cx="16" cy="17.500" r="2.600"/><circle cx="24" cy="17.500" r="2.600"/></g><g fill="#222"><circle cx="4" cy="20.500" r=".9"/><circle cx="9.500" cy="12.500" r=".9"/><circle cx="16" cy="17.500" r=".9"/><circle cx="24" cy="17.500" r=".9"/></g></svg>
<!-- zigzag grey -->
<svg style="left:185px;top:540px" width="28" height="24"><path d="M1 9l9-8 7 9 9-8" fill="none" stroke="#a0a0a0" stroke-width="1.300"/><path d="M11 5v6M11 11l-1.500-2M11 11l1.500-2" stroke="#b0b0b0" stroke-width="1" fill="none"/><path d="M1 20l5-4 4 3 5-4 4 3 6-4M3 23l5-3 5 2 5-3 6 1" fill="none" stroke="#d0d0d0" stroke-width="1.200" stroke-dasharray="2 1.500"/></svg>
<!-- row5: curve w nodes -->
<svg style="left:15px;top:571px" width="32" height="30"><path d="M2 2q14 13 0 26" fill="none" stroke="#a2a2a2" stroke-width="2"/><path d="M2 2l12 3M2 28l12-3M11 15h12" stroke="#c0c0c0" stroke-width="1" stroke-dasharray="2 1"/><g fill="#a6a6a6"><rect x="0" y="0" width="3.500" height="3.500"/><rect x="0" y="26" width="3.500" height="3.500"/><rect x="19" y="0" width="3.500" height="3.500"/><rect x="19" y="26" width="3.500" height="3.500"/><circle cx="15" cy="5" r="1.800"/><circle cx="15" cy="25" r="1.800"/></g><rect x="27" y="13" width="3" height="3" fill="#fff" stroke="#aaa"/><path d="M20 15l-3-1.500v3z" fill="#aaa"/></svg>
<!-- > fillet -->
<svg style="left:58px;top:571px" width="32" height="30"><path d="M9 5l8 4M9 25l8-4" stroke="#f4f09a" stroke-width="2.500"/><path d="M9 5l8 4M9 25l8-4" stroke="#b0b060" stroke-width=".8" stroke-dasharray="1 1.500"/><path d="M0.500 1l8.500 4M0.500 29l8.500-4" stroke="#0a0a0a" stroke-width="2.400"/><path d="M16 8.500l13 6-13 7" fill="none" stroke="#383838" stroke-width="2"/></svg>
<!-- trim scissors -->
<svg style="left:98px;top:570px" width="34" height="32"><path d="M12 22l13-12" stroke="#f4f09a" stroke-width="3"/><path d="M2 17l11 11M11 18l-8 8M21 2l11 11M31 2l-9 8" stroke="#0a0a0a" stroke-width="2.600"/><path d="M15 10l9 7M14 16l10-2" stroke="#222" stroke-width="1.300"/><path d="M15 10l6 4-7 2z" fill="#f4f4f4" stroke="#222" stroke-width=".8"/><circle cx="26.500" cy="14" r="2" fill="#fff" stroke="#0a0a0a" stroke-width="1.500"/><circle cx="25" cy="19.500" r="2" fill="#fff" stroke="#0a0a0a" stroke-width="1.500"/></svg>
<!-- blue cylinder -->
<svg style="left:142px;top:573px" width="32" height="29"><defs><linearGradient id="gCyl" x1="0" x2="1"><stop offset="0" stop-color="#5a62c8"/><stop offset=".5" stop-color="#a8acec"/><stop offset="1" stop-color="#5058b8"/></linearGradient></defs><ellipse cx="16" cy="24" rx="15" ry="4" fill="url(#gSh)"/><path d="M3 6l-2 14q15 8 29 0L28 6z" fill="url(#gCyl)"/><ellipse cx="15.500" cy="6" rx="12.500" ry="4" fill="#b8bcd8" stroke="#585868" stroke-width="1.300"/><ellipse cx="15.500" cy="6" rx="9" ry="2.300" fill="#d4d8ec"/><path d="M3 14q6-1 9-4l4 1 4-1q4 3 9 4" fill="none" stroke="#c8d470" stroke-width="1.200"/></svg>
<!-- grey arrows -->
<svg style="left:184px;top:570px" width="28" height="30"><path d="M13 2q-8 8-10 22" fill="none" stroke="#b6b6b6" stroke-width="1.600" stroke-dasharray="5 2"/><path d="M13 2h11M24 2l-3-1.500M24 2l-3 1.500M11 12l7 8M18 20l-1-3.500M18 20l-3.500-1M3 24l3 5M6 29l-.5-3M6 29l-3-1" stroke="#c0c0c0" stroke-width="1.300" fill="none"/><circle cx="13" cy="2" r="1.300" fill="#b0b0b0"/><circle cx="11" cy="12" r="1.300" fill="#b0b0b0"/></svg>
<!-- row6: mirror -->
<svg style="left:18px;top:608px" width="24" height="30"><path d="M11 2q-6 2-6 9q1 4-2 8l1 2 3-1q-4 4-4 8h9" fill="none" stroke="#9a9a9a" stroke-width="1.200"/><path d="M11.700 0v30" stroke="#777" stroke-width="1" stroke-dasharray="5 1.500 1.500 1.500"/><path d="M14 17h6M20 17l-2-1.500M20 17l-2 1.500" stroke="#d0d0d0" stroke-width="1" fill="none"/><path d="M18 10q4 3 2 12" stroke="#e0e0e0" fill="none"/></svg>
<!-- star folder -->
<svg style="left:57px;top:606px" width="34" height="32"><ellipse cx="18" cy="28" rx="13" ry="3" fill="url(#gSh)"/><path d="M2 12q6-7 14-4l14 2v12q-6 1-10 5l-16 3q-4-8-2-18z" fill="#f2e010"/><path d="M4 29q2-8 10-9l16-1v3q-7 1-10 5z" fill="#c8b808"/><path d="M21 1l1.500 8.500 8.500 1.500-7.500 4 1 8.500-6-6-8 3.500 4-7.500-5.500-6.500 8.500 1z" fill="#f8ec30" stroke="#222" stroke-width="1.500"/></svg>
<!-- Position row cells -->
<div class="c" style="left:15px;top:669px;width:39px;height:33px"></div>
<div class="c" style="left:56px;top:669px;width:39px;height:33px"></div>
<div class="c" style="left:98px;top:669px;width:39px;height:33px"></div>
<div class="c" style="left:140px;top:669px;width:39px;height:33px"></div>
<div class="c" style="left:182px;top:669px;width:39px;height:33px"></div>
<div class="c" style="left:15px;top:705px;width:39px;height:16px"></div>
<div class="c" style="left:56px;top:705px;width:39px;height:16px"></div>
<div class="c" style="left:98px;top:705px;width:33px;height:16px;background:#f6f6f6"></div><div class="ps" style="left:133px;top:705px;height:16px"></div>
<svg style="left:133px;top:706px" width="6" height="8"><rect x="1.500" y="0.500" width="3" height="3.500" fill="#111"/><path d="M0.500 0.500h5M0 4h6M3 4v4" stroke="#111" stroke-width="1" fill="none"/></svg>
<g></g>
<svg style="left:15px;top:669px" width="40" height="34"><path d="M1.500 2v30" stroke="#6e6e6e" stroke-width="1.200" stroke-dasharray="6 1.500 1.500 1.500"/><rect x="13" y="11.500" width="12" height="11" fill="#e8e8e8" stroke="#777" stroke-width="1.600"/><path d="M14 21l14-2-1 3-12 1z" fill="#c8c8c8" opacity=".7"/><path d="M12 17H4M4 17l3-2.500M4 17l3 2.500" stroke="#777" stroke-width="1.600" fill="none"/></svg>
<svg style="left:56px;top:669px" width="40" height="34"><path d="M28 2v30" stroke="#6e6e6e" stroke-width="1.200" stroke-dasharray="6 1.500 1.500 1.500"/><rect x="4.500" y="11.500" width="12" height="11" fill="#e8e8e8" stroke="#777" stroke-width="1.600"/><path d="M6 21l14-2-1 3-12 1z" fill="#c8c8c8" opacity=".7"/><path d="M18 17h8M26 17l-3-2.500M26 17l-3 2.500" stroke="#777" stroke-width="1.600" fill="none"/></svg>
<svg style="left:98px;top:669px" width="40" height="34"><path d="M3 5.500h26" stroke="#6e6e6e" stroke-width="1.200" stroke-dasharray="6 1.500 1.500 1.500"/><rect x="11.500" y="17.500" width="10.500" height="11" fill="#e8e8e8" stroke="#777" stroke-width="1.600"/><path d="M14 26l14-2-1 3-12 1z" fill="#c8c8c8" opacity=".7"/><path d="M16.500 16V8M16.500 8l-2.500 3M16.500 8l2.500 3" stroke="#777" stroke-width="1.600" fill="none"/></svg>
<svg style="left:140px;top:669px" width="40" height="34"><path d="M2 29h26" stroke="#6e6e6e" stroke-width="1.200" stroke-dasharray="6 1.500 1.500 1.500"/><rect x="9.500" y="5.500" width="10.500" height="11.500" fill="#e8e8e8" stroke="#777" stroke-width="1.600"/><path d="M16 24l12-3-1 3-9 2z" fill="#c8c8c8" opacity=".8"/><path d="M14.500 19v8M14.500 27l-2.500-3M14.500 27l2.500-3" stroke="#777" stroke-width="1.600" fill="none"/></svg>
<svg style="left:182px;top:669px" width="40" height="34"><path d="M2 2v30M28 2v30" stroke="#6e6e6e" stroke-width="1.200" stroke-dasharray="6 1.500 1.500 1.500"/><rect x="9.500" y="10.500" width="11.500" height="11" fill="#e8e8e8" stroke="#777" stroke-width="1.600"/><path d="M8 25l18-2-1 3-14 1z" fill="#c8c8c8" opacity=".7"/><path d="M3 16h5M23 16h4M6 14l2.500 2L6 18M25 14l-2.500 2 2.500 2" stroke="#777" stroke-width="1.400" fill="none"/></svg>
<!-- row B partial icons (clipped at 721) -->
<div class="a" style="left:0;top:705px;width:250px;height:16px;overflow:hidden">
<svg style="left:15px;top:0" width="40" height="30"><path d="M2 4.500h26" stroke="#6e6e6e" stroke-width="1.200" stroke-dasharray="6 1.500 1.500 1.500"/><path d="M15 14V7M15 7l-2.500 3M15 7l2.500 3" stroke="#777" stroke-width="1.600" fill="none"/><rect x="9" y="13.500" width="12" height="11" fill="#e8e8e8" stroke="#777" stroke-width="1.600"/></svg>
<svg style="left:56px;top:0" width="40" height="30"><rect x="3" y="4.500" width="25" height="24" fill="none" stroke="#6e6e6e" stroke-width="1.200" stroke-dasharray="6 1.500 1.500 1.500"/><path d="M15.500 14V7M15.500 7l-2.500 3M15.500 7l2.500 3" stroke="#777" stroke-width="1.600" fill="none"/><rect x="9.500" y="13.500" width="12" height="11" fill="#e8e8e8" stroke="#777" stroke-width="1.600"/></svg>
<svg style="left:98px;top:0" width="40" height="30"><rect x="3" y="4.500" width="25" height="24" fill="none" stroke="#8a8a8a" stroke-width="1.100" stroke-dasharray="1.500 2"/><path d="M15 13V7M15 7l-2.500 3M15 7l2.500 3" stroke="#777" stroke-width="1.400" fill="none"/><rect x="9.500" y="13.500" width="12" height="11" fill="#f0f0f0" stroke="#777" stroke-width="1.600"/><path d="M4 16l2-1.500v3zM27 16l-2-1.500v3z" fill="#777"/></svg>
<svg style="left:143px;top:0" width="30" height="30"><g fill="#111" font-family="Liberation Sans" font-size="6" font-weight="bold"><text x="2" y="19" transform="rotate(-60 3 17)">a</text><text x="6" y="12" transform="rotate(-35 7 10)">a</text><text x="11" y="9">a</text><text x="17" y="10" transform="rotate(25 18 8)">a</text><text x="22" y="15" transform="rotate(55 23 13)">c</text></g></svg>
<div class="t b" style="left:185px;top:2px;font-size:15px;line-height:18px;letter-spacing:-0.5px">Nes</div>
<div class="t b" style="left:185px;top:12px;font-size:15px;line-height:18px;letter-spacing:-0.5px">Nes</div>
</div>
<!-- scroll arrows left panel -->
<svg style="left:253px;top:61px" width="14" height="10"><path d="M1.800 5L7.400 0.200 13 5V9L7.400 4.200 1.800 9z" fill="#505050"/></svg>
<svg style="left:253px;top:694.500px" width="14" height="10"><path d="M1.800 0L7.400 4.800 13 0V4L7.400 8.800 1.800 4z" fill="#505050"/></svg>
<!-- CENTER -->
<div class="a" style="left:276px;top:43px;width:813px;height:1px;background:#a0a0a0"></div>
<div class="a" style="left:1089px;top:44px;width:4px;height:703px;background:#f7f7f7"></div>
<div class="a" style="left:277px;top:74px;width:794px;height:21px;border:1px solid #8a8a8a;border-right:none;background:#f0f0f0"></div>
<div class="a" style="left:277px;top:74px;width:21px;height:611px;border:1px solid #8a8a8a;background:#f0f0f0"></div>
<div class="a" style="left:298px;top:95px;width:773px;height:590px;background:#efefef"></div>
<svg class="a" style="left:0;top:0" width="1366" height="768" shape-rendering="crispEdges"><rect x="304" y="92" width="1" height="2" fill="#111"/><rect x="311" y="92" width="1" height="2" fill="#111"/><rect x="318" y="92" width="1" height="2" fill="#111"/><rect x="325" y="92" width="1" height="2" fill="#111"/><rect x="332" y="88" width="1" height="6" fill="#111"/><rect x="339" y="92" width="1" height="2" fill="#111"/><rect x="346" y="92" width="1" height="2" fill="#111"/><rect x="353" y="92" width="1" height="2" fill="#111"/><rect x="360" y="92" width="1" height="2" fill="#111"/><rect x="367" y="90" width="1" height="4" fill="#111"/><rect x="374" y="92" width="1" height="2" fill="#111"/><rect x="381" y="92" width="1" height="2" fill="#111"/><rect x="388" y="92" width="1" height="2" fill="#111"/><rect x="395" y="92" width="1" height="2" fill="#111"/><rect x="402" y="88" width="1" height="6" fill="#111"/><rect x="409" y="92" width="1" height="2" fill="#111"/><rect x="416" y="92" width="1" height="2" fill="#111"/><rect x="423" y="92" width="1" height="2" fill="#111"/><rect x="430" y="92" width="1" height="2" fill="#111"/><rect x="437" y="90" width="1" height="4" fill="#111"/><rect x="444" y="92" width="1" height="2" fill="#111"/><rect x="451" y="92" width="1" height="2" fill="#111"/><rect x="458" y="92" width="1" height="2" fill="#111"/><rect x="465" y="92" width="1" height="2" fill="#111"/><rect x="472" y="88" width="1" height="6" fill="#111"/><rect x="479" y="92" width="1" height="2" fill="#111"/><rect x="486" y="92" width="1" height="2" fill="#111"/><rect x="493" y="92" width="1" height="2" fill="#111"/><rect x="500" y="92" width="1" height="2" fill="#111"/><rect x="507" y="90" width="1" height="4" fill="#111"/><rect x="514" y="92" width="1" height="2" fill="#111"/><rect x="520" y="92" width="1" height="2" fill="#111"/><rect x="527" y="92" width="1" height="2" fill="#111"/><rect x="534" y="92" width="1" height="2" fill="#111"/><rect x="541" y="88" width="1" height="6" fill="#111"/><rect x="548" y="92" width="1" height="2" fill="#111"/><rect x="555" y="92" width="1" height="2" fill="#111"/><rect x="562" y="92" width="1" height="2" fill="#111"/><rect x="569" y="92" width="1" height="2" fill="#111"/><rect x="576" y="90" width="1" height="4" fill="#111"/><rect x="583" y="92" width="1" height="2" fill="#111"/><rect x="590" y="92" width="1" height="2" fill="#111"/><rect x="597" y="92" width="1" height="2" fill="#111"/><rect x="604" y="92" width="1" height="2" fill="#111"/><rect x="611" y="88" width="1" height="6" fill="#111"/><rect x="618" y="92" width="1" height="2" fill="#111"/><rect x="625" y="92" width="1" height="2" fill="#111"/><rect x="632" y="92" width="1" height="2" fill="#111"/><rect x="639" y="92" width="1" height="2" fill="#111"/><rect x="646" y="90" width="1" height="4" fill="#111"/><rect x="653" y="92" width="1" height="2" fill="#111"/><rect x="660" y="92" width="1" height="2" fill="#111"/><rect x="667" y="92" width="1" height="2" fill="#111"/><rect x="674" y="92" width="1" height="2" fill="#111"/><rect x="681" y="88" width="1" height="6" fill="#111"/><rect x="688" y="92" width="1" height="2" fill="#111"/><rect x="695" y="92" width="1" height="2" fill="#111"/><rect x="702" y="92" width="1" height="2" fill="#111"/><rect x="709" y="92" width="1" height="2" fill="#111"/><rect x="716" y="90" width="1" height="4" fill="#111"/><rect x="723" y="92" width="1" height="2" fill="#111"/><rect x="730" y="92" width="1" height="2" fill="#111"/><rect x="737" y="92" width="1" height="2" fill="#111"/><rect x="744" y="92" width="1" height="2" fill="#111"/><rect x="751" y="88" width="1" height="6" fill="#111"/><rect x="758" y="92" width="1" height="2" fill="#111"/><rect x="765" y="92" width="1" height="2" fill="#111"/><rect x="772" y="92" width="1" height="2" fill="#111"/><rect x="779" y="92" width="1" height="2" fill="#111"/><rect x="786" y="90" width="1" height="4" fill="#111"/><rect x="793" y="92" width="1" height="2" fill="#111"/><rect x="800" y="92" width="1" height="2" fill="#111"/><rect x="807" y="92" width="1" height="2" fill="#111"/><rect x="814" y="92" width="1" height="2" fill="#111"/><rect x="821" y="88" width="1" height="6" fill="#111"/><rect x="828" y="92" width="1" height="2" fill="#111"/><rect x="835" y="92" width="1" height="2" fill="#111"/><rect x="842" y="92" width="1" height="2" fill="#111"/><rect x="848" y="92" width="1" height="2" fill="#111"/><rect x="855" y="90" width="1" height="4" fill="#111"/><rect x="862" y="92" width="1" height="2" fill="#111"/><rect x="869" y="92" width="1" height="2" fill="#111"/><rect x="876" y="92" width="1" height="2" fill="#111"/><rect x="883" y="92" width="1" height="2" fill="#111"/><rect x="890" y="88" width="1" height="6" fill="#111"/><rect x="897" y="92" width="1" height="2" fill="#111"/><rect x="904" y="92" width="1" height="2" fill="#111"/><rect x="911" y="92" width="1" height="2" fill="#111"/><rect x="918" y="92" width="1" height="2" fill="#111"/><rect x="925" y="90" width="1" height="4" fill="#111"/><rect x="932" y="92" width="1" height="2" fill="#111"/><rect x="939" y="92" width="1" height="2" fill="#111"/><rect x="946" y="92" width="1" height="2" fill="#111"/><rect x="953" y="92" width="1" height="2" fill="#111"/><rect x="960" y="88" width="1" height="6" fill="#111"/><rect x="967" y="92" width="1" height="2" fill="#111"/><rect x="974" y="92" width="1" height="2" fill="#111"/><rect x="981" y="92" width="1" height="2" fill="#111"/><rect x="988" y="92" width="1" height="2" fill="#111"/><rect x="995" y="90" width="1" height="4" fill="#111"/><rect x="1002" y="92" width="1" height="2" fill="#111"/><rect x="1009" y="92" width="1" height="2" fill="#111"/><rect x="1016" y="92" width="1" height="2" fill="#111"/><rect x="1023" y="92" width="1" height="2" fill="#111"/><rect x="1030" y="88" width="1" height="6" fill="#111"/><rect x="1037" y="92" width="1" height="2" fill="#111"/><rect x="1044" y="92" width="1" height="2" fill="#111"/><rect x="1051" y="92" width="1" height="2" fill="#111"/><rect x="1058" y="92" width="1" height="2" fill="#111"/><rect x="1065" y="90" width="1" height="4" fill="#111"/><rect x="295" y="682" width="2" height="1" fill="#111"/><rect x="295" y="675" width="2" height="1" fill="#111"/><rect x="291" y="668" width="6" height="1" fill="#111"/><rect x="295" y="661" width="2" height="1" fill="#111"/><rect x="295" y="654" width="2" height="1" fill="#111"/><rect x="295" y="647" width="2" height="1" fill="#111"/><rect x="295" y="640" width="2" height="1" fill="#111"/><rect x="293" y="633" width="4" height="1" fill="#111"/><rect x="295" y="626" width="2" height="1" fill="#111"/><rect x="295" y="619" width="2" height="1" fill="#111"/><rect x="295" y="612" width="2" height="1" fill="#111"/><rect x="295" y="606" width="2" height="1" fill="#111"/><rect x="291" y="599" width="6" height="1" fill="#111"/><rect x="295" y="592" width="2" height="1" fill="#111"/><rect x="295" y="585" width="2" height="1" fill="#111"/><rect x="295" y="578" width="2" height="1" fill="#111"/><rect x="295" y="571" width="2" height="1" fill="#111"/><rect x="293" y="564" width="4" height="1" fill="#111"/><rect x="295" y="557" width="2" height="1" fill="#111"/><rect x="295" y="550" width="2" height="1" fill="#111"/><rect x="295" y="543" width="2" height="1" fill="#111"/><rect x="295" y="536" width="2" height="1" fill="#111"/><rect x="291" y="529" width="6" height="1" fill="#111"/><rect x="295" y="522" width="2" height="1" fill="#111"/><rect x="295" y="515" width="2" height="1" fill="#111"/><rect x="295" y="508" width="2" height="1" fill="#111"/><rect x="295" y="501" width="2" height="1" fill="#111"/><rect x="293" y="494" width="4" height="1" fill="#111"/><rect x="295" y="487" width="2" height="1" fill="#111"/><rect x="295" y="480" width="2" height="1" fill="#111"/><rect x="295" y="473" width="2" height="1" fill="#111"/><rect x="295" y="466" width="2" height="1" fill="#111"/><rect x="291" y="459" width="6" height="1" fill="#111"/><rect x="295" y="452" width="2" height="1" fill="#111"/><rect x="295" y="445" width="2" height="1" fill="#111"/><rect x="295" y="438" width="2" height="1" fill="#111"/><rect x="295" y="431" width="2" height="1" fill="#111"/><rect x="293" y="424" width="4" height="1" fill="#111"/><rect x="295" y="417" width="2" height="1" fill="#111"/><rect x="295" y="410" width="2" height="1" fill="#111"/><rect x="295" y="403" width="2" height="1" fill="#111"/><rect x="295" y="396" width="2" height="1" fill="#111"/><rect x="291" y="389" width="6" height="1" fill="#111"/><rect x="295" y="382" width="2" height="1" fill="#111"/><rect x="295" y="375" width="2" height="1" fill="#111"/><rect x="295" y="368" width="2" height="1" fill="#111"/><rect x="295" y="361" width="2" height="1" fill="#111"/><rect x="293" y="354" width="4" height="1" fill="#111"/><rect x="295" y="347" width="2" height="1" fill="#111"/><rect x="295" y="340" width="2" height="1" fill="#111"/><rect x="295" y="333" width="2" height="1" fill="#111"/><rect x="295" y="326" width="2" height="1" fill="#111"/><rect x="291" y="319" width="6" height="1" fill="#111"/><rect x="295" y="312" width="2" height="1" fill="#111"/><rect x="295" y="305" width="2" height="1" fill="#111"/><rect x="295" y="298" width="2" height="1" fill="#111"/><rect x="295" y="291" width="2" height="1" fill="#111"/><rect x="293" y="284" width="4" height="1" fill="#111"/><rect x="295" y="277" width="2" height="1" fill="#111"/><rect x="295" y="270" width="2" height="1" fill="#111"/><rect x="295" y="263" width="2" height="1" fill="#111"/><rect x="295" y="256" width="2" height="1" fill="#111"/><rect x="291" y="249" width="6" height="1" fill="#111"/><rect x="295" y="242" width="2" height="1" fill="#111"/><rect x="295" y="235" width="2" height="1" fill="#111"/><rect x="295" y="228" width="2" height="1" fill="#111"/><rect x="295" y="221" width="2" height="1" fill="#111"/><rect x="293" y="214" width="4" height="1" fill="#111"/><rect x="295" y="207" width="2" height="1" fill="#111"/><rect x="295" y="200" width="2" height="1" fill="#111"/><rect x="295" y="193" width="2" height="1" fill="#111"/><rect x="295" y="186" width="2" height="1" fill="#111"/><rect x="291" y="179" width="6" height="1" fill="#111"/><rect x="295" y="172" width="2" height="1" fill="#111"/><rect x="295" y="165" width="2" height="1" fill="#111"/><rect x="295" y="158" width="2" height="1" fill="#111"/><rect x="295" y="151" width="2" height="1" fill="#111"/><rect x="293" y="144" width="4" height="1" fill="#111"/><rect x="295" y="137" width="2" height="1" fill="#111"/><rect x="295" y="130" width="2" height="1" fill="#111"/><rect x="295" y="123" width="2" height="1" fill="#111"/><rect x="295" y="116" width="2" height="1" fill="#111"/><rect x="291" y="109" width="6" height="1" fill="#111"/><rect x="295" y="102" width="2" height="1" fill="#111"/><rect x="1066" y="76" width="1" height="18" fill="#111"/><rect x="279" y="566" width="18" height="1" fill="#111"/></svg>
<div class="rl" style="left:312.0px;top:77px;width:40px;text-align:center">-1000</div>
<div class="rl" style="left:381.8px;top:77px;width:40px;text-align:center">-800</div>
<div class="rl" style="left:451.6px;top:77px;width:40px;text-align:center">-600</div>
<div class="rl" style="left:521.4px;top:77px;width:40px;text-align:center">-400</div>
<div class="rl" style="left:591.2px;top:77px;width:40px;text-align:center">-200</div>
<div class="rl" style="left:661.0px;top:77px;width:40px;text-align:center">0</div>
<div class="rl" style="left:730.8px;top:77px;width:40px;text-align:center">200</div>
<div class="rl" style="left:800.6px;top:77px;width:40px;text-align:center">400</div>
<div class="rl" style="left:870.4px;top:77px;width:40px;text-align:center">600</div>
<div class="rl" style="left:940.2px;top:77px;width:40px;text-align:center">800</div>
<div class="rl" style="left:1027.5px;top:76.5px;font-size:10px;color:#000;transform:scaleX(.855);transform-origin:left center">millimetres</div>
<div class="rl" style="left:265px;top:662.9px;width:40px;text-align:center;transform:rotate(-90deg);transform-origin:center">-800</div>
<div class="rl" style="left:265px;top:593.0px;width:40px;text-align:center;transform:rotate(-90deg);transform-origin:center">-600</div>
<div class="rl" style="left:265px;top:523.1px;width:40px;text-align:center;transform:rotate(-90deg);transform-origin:center">-400</div>
<div class="rl" style="left:265px;top:453.3px;width:40px;text-align:center;transform:rotate(-90deg);transform-origin:center">-200</div>
<div class="rl" style="left:265px;top:383.4px;width:40px;text-align:center;transform:rotate(-90deg);transform-origin:center">0</div>
<div class="rl" style="left:265px;top:313.5px;width:40px;text-align:center;transform:rotate(-90deg);transform-origin:center">200</div>
<div class="rl" style="left:265px;top:243.6px;width:40px;text-align:center;transform:rotate(-90deg);transform-origin:center">400</div>
<div class="rl" style="left:265px;top:173.8px;width:40px;text-align:center;transform:rotate(-90deg);transform-origin:center">600</div>
<div class="rl" style="left:265px;top:103.9px;width:40px;text-align:center;transform:rotate(-90deg);transform-origin:center">800</div>
<svg style="left:281px;top:77px" width="14" height="14" shape-rendering="crispEdges"><g fill="#999"><rect x="0" y="6" width="2" height="1"/><rect x="3" y="6" width="2" height="1"/><rect x="8" y="6" width="2" height="1"/><rect x="11" y="6" width="2" height="1"/><rect x="5" y="0" width="1" height="2"/><rect x="5" y="3" width="1" height="2"/><rect x="5" y="8" width="1" height="2"/><rect x="5" y="11" width="1" height="2"/><rect x="7" y="0" width="1" height="2"/><rect x="7" y="3" width="1" height="2"/><rect x="7" y="8" width="1" height="2"/><rect x="7" y="11" width="1" height="2"/></g></svg>
<div class="a" style="left:1071px;top:74px;width:17px;height:21px;background:#f1f1f1;border-top:1px solid #8e8e8e;border-left:1px solid #f8f8f8;border-right:1.5px solid #6c6c6c;border-bottom:1.5px solid #6c6c6c"></div>
<svg style="left:1075px;top:80px" width="8" height="9"><rect x="0" y="0.7" width="3" height="1.2" fill="#111"/><rect x="4.6" y="0.7" width="3" height="1.2" fill="#111"/><path d="M0.3 3.8h7.2l-3.600 4.200z" fill="#111"/></svg>
<div class="a" style="left:1071px;top:95px;width:17px;height:591px;background:#f0f0f0"></div>
<div class="a" style="left:1073px;top:112px;width:13px;height:556px;background:#cdcdcd"></div>
<svg style="left:1075px;top:101px" width="9" height="6"><path d="M1.2 5L4.5 1.7 7.800 5" fill="none" stroke="#4a4a4a" stroke-width="2"/></svg>
<svg style="left:1075px;top:674px" width="9" height="6"><path d="M1.2 1L4.5 4.3 7.800 1" fill="none" stroke="#4a4a4a" stroke-width="2"/></svg>
<div class="a" style="left:277px;top:685px;width:21px;height:17px;background:#f1f1f1;border-top:1px solid #fafafa;border-left:1px solid #bdbdbd;border-right:1.5px solid #6c6c6c;border-bottom:1.5px solid #6c6c6c"></div>
<svg style="left:283.5px;top:689px" width="10" height="9"><rect x="0" y="0.300" width="1.400" height="3" fill="#111"/><rect x="0" y="4.800" width="1.400" height="3" fill="#111"/><path d="M3.500 0v8l4.200-4z" fill="#111"/></svg>
<div class="a" style="left:315px;top:686.5px;width:739px;height:14px;background:#cdcdcd"></div>
<svg style="left:303px;top:689px" width="6" height="9"><path d="M5.3 0.7L1.5 4.5 5.3 8.3" fill="none" stroke="#4a4a4a" stroke-width="2"/></svg>
<svg style="left:1059px;top:689px" width="6" height="9"><path d="M0.7 0.7L4.5 4.5 0.7 8.3" fill="none" stroke="#4a4a4a" stroke-width="2"/></svg>
<div class="a" style="left:277px;top:706px;width:812px;height:1px;background:#b4b4b4"></div>
<div class="a" style="left:277px;top:706px;width:1px;height:41px;background:#a8a8a8"></div>
<div class="a" style="left:277px;top:707px;width:812px;height:1px;background:#fbfbfb"></div>
<div class="a" style="left:298px;top:723px;width:25px;height:20px;background:#000"></div>
<div class="a" style="left:283px;top:711px;width:26px;height:20px;background:#fff;border:1px solid #111"></div>
<svg style="left:311px;top:712px" width="12" height="10"><ellipse cx="4.5" cy="3.5" rx="3.7" ry="2.7" fill="#fff" stroke="#111" stroke-width="1"/><ellipse cx="7.5" cy="6" rx="3.7" ry="2.7" fill="#fff" stroke="#111" stroke-width="1"/></svg>
<div class="sw" style="left:333px;background:#ffffff"></div>
<div class="sw" style="left:368px;background:#000000"></div>
<div class="sw" style="left:403px;background:#00ffff"></div>
<div class="sw" style="left:438px;background:#3040dc"></div>
<div class="sw" style="left:473px;background:#50b850"></div>
<div class="sw" style="left:508px;background:#dc1020"></div>
<div class="sw" style="left:543px;background:#a030e0"></div>
<div class="sw" style="left:578px;background:#ffff80"></div>
<div class="sw" style="left:613px;background:#a8a038"></div>
<div class="sw" style="left:648px;background:#fcc818"></div>
<div class="sw" style="left:683px;background:#060606"></div>
<div class="sw" style="left:718px;background:#060606"></div>
<div class="sw" style="left:753px;background:#060606"></div>
<div class="sw" style="left:788px;background:#060606"></div>
<div class="sw" style="left:823px;background:#060606"></div>
<div class="sw" style="left:858px;background:#060606"></div>
<div class="sw" style="left:893px;background:#060606"></div>
<div class="sw" style="left:928px;background:#060606"></div>
<div class="sw" style="left:963px;background:#060606"></div>
<div class="sw" style="left:998px;background:#060606"></div>
<div class="sw" style="left:1033px;background:#060606"></div>
<svg style="left:1075px;top:713px" width="9" height="6"><path d="M1.2 5L4.5 1.7 7.800 5" fill="none" stroke="#4a4a4a" stroke-width="2"/></svg>
<svg style="left:1075px;top:735px" width="9" height="6"><path d="M1.2 1L4.5 4.3 7.800 1" fill="none" stroke="#4a4a4a" stroke-width="2"/></svg>
<div class="a" style="left:277px;top:746px;width:815px;height:1px;background:#fafafa"></div>
<!-- 2D view toolbar -->
<div class="t b" style="left:284px;top:49px;font-size:16.5px;line-height:17px;letter-spacing:-0.3px;transform:scaleX(.84);transform-origin:left">3D</div>
<svg width="0" height="0"><defs>
<radialGradient id="gLens" cx=".4" cy=".35" r=".7"><stop offset="0" stop-color="#eef7fc"/><stop offset="1" stop-color="#b6d6ea"/></radialGradient>
<g id="mag"><path d="M10.800 10.800l1.400 1.300" stroke="#c8a06c" stroke-width="4" stroke-linecap="round"/><circle cx="6.500" cy="6.500" r="5.800" fill="url(#gLens)" stroke="#587898" stroke-width="1.200"/></g>
</defs></svg>
<svg style="left:308px;top:50px" width="18" height="18"><g><path d="M10.800 10.800l1.400 1.300" stroke="#c8a06c" stroke-width="4" stroke-linecap="round"/><circle cx="6.500" cy="6.500" r="5.800" fill="url(#gLens)" stroke="#587898" stroke-width="1.200"/></g><path d="M3 6.500h7M6.500 3v7" stroke="#1c4068" stroke-width="1.500"/></svg>
<svg style="left:331px;top:50px" width="18" height="18"><g><path d="M10.800 10.800l1.400 1.300" stroke="#c8a06c" stroke-width="4" stroke-linecap="round"/><circle cx="6.500" cy="6.500" r="5.800" fill="url(#gLens)" stroke="#587898" stroke-width="1.200"/></g><path d="M3 6.500h7" stroke="#1c4068" stroke-width="1.500"/></svg>
<svg style="left:354px;top:50px" width="18" height="18"><g><path d="M10.800 10.800l1.400 1.300" stroke="#c8a06c" stroke-width="4" stroke-linecap="round"/><circle cx="6.500" cy="6.500" r="5.800" fill="url(#gLens)" stroke="#587898" stroke-width="1.200"/></g><path d="M9.500 7.500a3 3 0 1 1-3-3.500" fill="none" stroke="#a8a010" stroke-width="1.800"/><path d="M3 4l4-2v4z" fill="#a8a010"/></svg>
<div class="a" style="left:377px;top:50px;width:1px;height:18px;background:#a4a4a4"></div>
<svg style="left:385px;top:50px" width="18" height="18"><g><path d="M10.800 10.800l1.400 1.300" stroke="#c8a06c" stroke-width="4" stroke-linecap="round"/><circle cx="6.500" cy="6.500" r="5.800" fill="url(#gLens)" stroke="#587898" stroke-width="1.200"/></g><text x="2" y="9" font-family="Liberation Sans" font-size="6.500" font-weight="bold" fill="#48688c">1:1</text></svg>
<svg style="left:408px;top:50px" width="18" height="18"><g><path d="M10.800 10.800l1.400 1.300" stroke="#c8a06c" stroke-width="4" stroke-linecap="round"/><circle cx="6.500" cy="6.500" r="5.800" fill="url(#gLens)" stroke="#587898" stroke-width="1.200"/></g><rect x="3.500" y="4" width="6" height="5" fill="none" stroke="#1c4068" stroke-width="1.300"/></svg>
<svg style="left:431px;top:50px" width="18" height="18"><path d="M10 10.500l3.500 3" stroke="#9c9c9c" stroke-width="4.500" stroke-linecap="round"/><circle cx="7" cy="7.500" r="6.500" fill="#9e9e9e"/><circle cx="4" cy="4.500" r="2.500" fill="#a8a8a8"/></svg>
<div class="a" style="left:454px;top:50px;width:1px;height:18px;background:#a4a4a4"></div>
<div class="a" style="left:459px;top:48px;width:23px;height:21px;background:#f8f8f8;border-top:1px solid #8c8c8c;border-left:1px solid #8c8c8c;border-right:1px solid #b0b0b0"></div>
<div class="a" style="left:482px;top:48px;width:22px;height:21px;background:#f8f8f8;border-top:1px solid #8c8c8c;border-right:1px solid #d8d8d8"></div>
<svg style="left:465px;top:52px" width="16" height="15"><path d="M2 1h6M2 4h4M2 7h3M2 10h4M2 13h6" stroke="#222" stroke-width="1.200" stroke-dasharray="1.500 1"/><path d="M4.500 7l5-4.500v3h5v3.500h-5v3z" fill="#555" stroke="#0a0a0a" stroke-width="1.200"/></svg>
<svg style="left:486px;top:52px" width="16" height="15"><path d="M8 1h6M10 4h4M11 7h3M10 10h4M8 13h6" stroke="#222" stroke-width="1.200" stroke-dasharray="1.500 1"/><path d="M11.500 7l-5-4.500v3h-5v3.500h5v3z" fill="#555" stroke="#0a0a0a" stroke-width="1.200"/></svg>
<svg style="left:507px;top:52px" width="19" height="13"><path d="M1 6.500l8-5.500v11z" fill="#5a68c0"/><path d="M13 8l4 3.500" stroke="#d0a878" stroke-width="2.400" stroke-linecap="round"/><circle cx="11" cy="5.500" r="4" fill="#c4d4f0" stroke="#98a8d0" stroke-width="1"/></svg>
<div class="a" style="left:531px;top:50px;width:1px;height:18px;background:#a4a4a4"></div>
<div class="a" style="left:544px;top:58px;width:74px;height:2px;background:#8a8a8a"></div>
<div class="a" style="left:544px;top:60px;width:74px;height:1px;background:#fbfbfb"></div>
<svg style="left:617px;top:49px" width="12" height="22"><path d="M1 1h8.500v16l-5 4-3.500-3z" fill="#f1f1f1"/><path d="M9.500 1v16l-5 4" fill="none" stroke="#5a5a5a" stroke-width="1.600"/><path d="M1 18V1h8" fill="none" stroke="#fdfdfd" stroke-width="1"/></svg>
<!-- ARTWORK -->
<svg style="left:0;top:0" width="1366" height="768" viewBox="0 0 1366 768">
<defs>
<clipPath id="cR"><rect x="605" y="139" width="156" height="506"/></clipPath>
<linearGradient id="gStripe" x1="0" y1="0" x2="0" y2="1"><stop offset="0" stop-color="#2c2c2c"/><stop offset=".12" stop-color="#555"/><stop offset=".5" stop-color="#727272"/><stop offset=".85" stop-color="#5c5c5c"/><stop offset="1" stop-color="#303030"/></linearGradient>
<linearGradient id="gBar" x1="0" y1="0" x2="1" y2="0"><stop offset="0" stop-color="#c6c6c6"/><stop offset=".45" stop-color="#ececec"/><stop offset="1" stop-color="#c2c2c2"/></linearGradient>
<linearGradient id="gWave" x1="0" y1="0" x2="0" y2="1"><stop offset="0" stop-color="#3a3a3a"/><stop offset=".35" stop-color="#6a6a6a"/><stop offset=".7" stop-color="#7a7a7a"/><stop offset="1" stop-color="#404040"/></linearGradient>
<radialGradient id="gFace" cx="628" cy="262" r="100" gradientUnits="userSpaceOnUse"><stop offset="0" stop-color="#eaeaea"/><stop offset=".5" stop-color="#e2e2e2"/><stop offset=".78" stop-color="#d4d4d4"/><stop offset="1" stop-color="#c2c2c2"/></radialGradient>
<filter id="b1" x="-20%" y="-20%" width="140%" height="140%"><feGaussianBlur stdDeviation="1"/></filter>
<filter id="b2" x="-20%" y="-20%" width="140%" height="140%"><feGaussianBlur stdDeviation="2.2"/></filter>
<filter id="b4" x="-30%" y="-30%" width="160%" height="160%"><feGaussianBlur stdDeviation="4.5"/></filter>
<filter id="b3" x="-20%" y="-20%" width="140%" height="140%"><feGaussianBlur stdDeviation="2.4"/></filter>
<filter id="b6" x="-30%" y="-30%" width="160%" height="160%"><feGaussianBlur stdDeviation="6"/></filter>
<filter id="b05"><feGaussianBlur stdDeviation="0.6"/></filter>
</defs>
<rect x="563.5" y="108.5" width="237" height="562" fill="#ffff80" stroke="#0a0a0a" stroke-width="1"/>
<g clip-path="url(#cR)">
<clipPath id="cS"><path d="M605 139 H761 V645 H710 V300 H605z"/></clipPath>
<g clip-path="url(#cS)">
<rect x="605" y="139.3" width="156" height="23.2" fill="url(#gStripe)"/>
<rect x="605" y="167.0" width="156" height="23.2" fill="url(#gStripe)"/>
<rect x="605" y="194.7" width="156" height="23.2" fill="url(#gStripe)"/>
<rect x="605" y="222.4" width="156" height="23.2" fill="url(#gStripe)"/>
<rect x="605" y="250.1" width="156" height="23.2" fill="url(#gStripe)"/>
<rect x="605" y="277.8" width="156" height="23.2" fill="url(#gStripe)"/>
<rect x="605" y="305.5" width="156" height="23.2" fill="url(#gStripe)"/>
<rect x="605" y="333.2" width="156" height="23.2" fill="url(#gStripe)"/>
<rect x="605" y="360.9" width="156" height="23.2" fill="url(#gStripe)"/>
<rect x="605" y="388.6" width="156" height="23.2" fill="url(#gStripe)"/>
<rect x="605" y="416.3" width="156" height="23.2" fill="url(#gStripe)"/>
<rect x="605" y="444.0" width="156" height="23.2" fill="url(#gStripe)"/>
<rect x="605" y="471.7" width="156" height="23.2" fill="url(#gStripe)"/>
<rect x="605" y="499.4" width="156" height="23.2" fill="url(#gStripe)"/>
<rect x="605" y="527.1" width="156" height="23.2" fill="url(#gStripe)"/>
<rect x="605" y="554.8" width="156" height="23.2" fill="url(#gStripe)"/>
<rect x="605" y="582.5" width="156" height="23.2" fill="url(#gStripe)"/>
<rect x="605" y="610.2" width="156" height="23.2" fill="url(#gStripe)"/>
<rect x="605" y="637.9" width="156" height="23.2" fill="url(#gStripe)"/>
</g>
<rect x="759.5" y="139" width="1.5" height="506" fill="#000" opacity=".22"/>
<path d="M605 579 Q635 579 658.6 585.5 Q675 590 689 595 Q712 599.5 738 597.5 Q752 595 761 584.5 L761 645 L605 645z" fill="#5e5e5e"/>
<g filter="url(#b2)">
<path d="M605 579 Q635 579 658.6 585.5 Q675 590 689 595 Q712 599.5 738 597.5 Q752 595 761 584.5" fill="none" stroke="#2a2a2a" stroke-width="7"/>
<path d="M605 605.5 Q612 601.2 621 601.2 Q642 601.5 670 611.8 Q690 618 705.5 620 Q720 621 731 619 Q748 616.5 761.8 608.5" fill="none" stroke="#2e2e2e" stroke-width="9"/>
<path d="M605 645 H761" stroke="#2a2a2a" stroke-width="7"/>
</g>
<path d="M605 591 Q640 589 670 600 Q700 609 731 608 Q748 606 761 598" fill="none" stroke="#787878" stroke-width="5" filter="url(#b2)" opacity=".8"/>
<path d="M605 621 Q612 617 621 617 Q642 617 670 628 Q690 634 705.5 636 Q720 637 731 635 Q748 632 761 624" fill="none" stroke="#7e7e7e" stroke-width="9" filter="url(#b4)" opacity=".9"/>
<path d="M605 605.5 Q612 601.2 621 601.2 Q642 601.5 670 611.8 Q690 618 705.5 620 Q720 621 731 619 Q748 616.5 761.8 608.5" fill="none" stroke="#ffff80" stroke-width="3.4"/>
<path d="M737 597.6 Q752 595 761.5 584.5" fill="none" stroke="#ffff80" stroke-width="3.2"/>
<path d="M605 139 L644 139 Q672 162 690 193 Q703 222 708 250 Q710.3 262 710.3 275 L710.3 372 Q707 395 701.600 412 Q697 428 690 446 Q681 465 667.700 485 Q652 503 630 518 L605 521z" fill="#a9a9a9"/>
<g filter="url(#b3)"><path d="M585 177.5 L605.0 177.5 C609.2 177.8 621.7 176.7 630.0 179.0 C638.3 181.3 647.1 185.0 654.8 191.5 C662.4 198.0 670.0 208.9 675.9 218.0 C681.8 227.1 686.5 236.1 690.0 246.0 C693.5 255.9 695.4 266.7 697.0 277.7 C698.6 288.7 699.2 299.9 699.6 312.0 C700.0 324.1 699.6 336.7 699.5 350.0 C699.4 363.3 699.4 380.8 699.0 392.0 C698.6 403.2 698.7 408.9 697.0 417.0 C695.3 425.1 693.5 433.1 689.0 440.5 C684.5 447.9 677.0 456.5 670.0 461.6 C663.0 466.7 654.6 469.3 646.8 471.0 C639.0 472.7 629.6 473.6 623.4 472.0 C617.2 470.4 612.1 466.1 609.4 461.6 C606.7 457.1 606.2 450.1 607.0 445.0 C607.8 439.9 610.5 435.1 614.0 431.0 C617.5 426.9 623.7 422.5 628.0 420.6 C632.3 418.7 638.3 418.2 639.8 419.4 C641.3 420.6 638.6 425.1 637.0 428.0 C635.4 430.9 631.7 434.2 630.0 437.0 C628.3 439.8 626.9 442.5 627.0 445.0 C627.1 447.5 627.1 451.4 630.4 452.2 C633.7 453.0 641.7 452.7 646.8 450.0 C651.9 447.3 657.0 442.1 660.9 435.8 C664.8 429.5 668.0 419.4 670.3 412.4 C672.6 405.4 673.4 400.8 674.5 393.7 C675.6 386.6 676.8 377.8 677.0 370.0 C677.2 362.2 676.8 353.8 675.5 346.8 C674.2 339.8 672.1 334.0 669.0 328.0 C665.9 322.0 661.7 315.9 657.0 311.0 C652.3 306.1 646.7 302.1 641.0 298.5 C635.3 294.9 629.0 291.8 623.0 289.5 C617.0 287.2 608.0 285.8 605.0 285.0 L585 285z" fill="#e7e7e7"/><path d="M605.0 177.5 C609.2 177.8 621.7 176.7 630.0 179.0 C638.3 181.3 647.1 185.0 654.8 191.5 C662.4 198.0 670.0 208.9 675.9 218.0 C681.8 227.1 686.5 236.1 690.0 246.0 C693.5 255.9 695.4 266.7 697.0 277.7 C698.6 288.7 699.2 299.9 699.6 312.0 C700.0 324.1 699.6 336.7 699.5 350.0 C699.4 363.3 699.4 380.8 699.0 392.0 C698.6 403.2 698.7 408.9 697.0 417.0 C695.3 425.1 693.5 433.1 689.0 440.5 C684.5 447.9 677.0 456.5 670.0 461.6 C663.0 466.7 654.6 469.3 646.8 471.0 C639.0 472.7 629.6 473.6 623.4 472.0 C617.2 470.4 612.1 466.1 609.4 461.6 C606.7 457.1 606.2 450.1 607.0 445.0 C607.8 439.9 610.5 435.1 614.0 431.0 C617.5 426.9 623.7 422.5 628.0 420.6 C632.3 418.7 638.3 418.2 639.8 419.4 C641.3 420.6 638.6 425.1 637.0 428.0 C635.4 430.9 631.7 434.2 630.0 437.0 C628.3 439.8 626.9 442.5 627.0 445.0 C627.1 447.5 627.1 451.4 630.4 452.2 C633.7 453.0 641.7 452.7 646.8 450.0 C651.9 447.3 657.0 442.1 660.9 435.8 C664.8 429.5 668.0 419.4 670.3 412.4 C672.6 405.4 673.4 400.8 674.5 393.7 C675.6 386.6 676.8 377.8 677.0 370.0 C677.2 362.2 676.8 353.8 675.5 346.8 C674.2 339.8 672.1 334.0 669.0 328.0 C665.9 322.0 661.7 315.9 657.0 311.0 C652.3 306.1 646.7 302.1 641.0 298.5 C635.3 294.9 629.0 291.8 623.0 289.5 C617.0 287.2 608.0 285.8 605.0 285.0" fill="none" stroke="#a9a9a9" stroke-width="4"/></g>
<clipPath id="cF"><path d="M585 177.5 L605.0 177.5 C609.2 177.8 621.7 176.7 630.0 179.0 C638.3 181.3 647.1 185.0 654.8 191.5 C662.4 198.0 670.0 208.9 675.9 218.0 C681.8 227.1 686.5 236.1 690.0 246.0 C693.5 255.9 695.4 266.7 697.0 277.7 C698.6 288.7 699.2 299.9 699.6 312.0 C700.0 324.1 699.6 336.7 699.5 350.0 C699.4 363.3 699.4 380.8 699.0 392.0 C698.6 403.2 698.7 408.9 697.0 417.0 C695.3 425.1 693.5 433.1 689.0 440.5 C684.5 447.9 677.0 456.5 670.0 461.6 C663.0 466.7 654.6 469.3 646.8 471.0 C639.0 472.7 629.6 473.6 623.4 472.0 C617.2 470.4 612.1 466.1 609.4 461.6 C606.7 457.1 606.2 450.1 607.0 445.0 C607.8 439.9 610.5 435.1 614.0 431.0 C617.5 426.9 623.7 422.5 628.0 420.6 C632.3 418.7 638.3 418.2 639.8 419.4 C641.3 420.6 638.6 425.1 637.0 428.0 C635.4 430.9 631.7 434.2 630.0 437.0 C628.3 439.8 626.9 442.5 627.0 445.0 C627.1 447.5 627.1 451.4 630.4 452.2 C633.7 453.0 641.7 452.7 646.8 450.0 C651.9 447.3 657.0 442.1 660.9 435.8 C664.8 429.5 668.0 419.4 670.3 412.4 C672.6 405.4 673.4 400.8 674.5 393.7 C675.6 386.6 676.8 377.8 677.0 370.0 C677.2 362.2 676.8 353.8 675.5 346.8 C674.2 339.8 672.1 334.0 669.0 328.0 C665.9 322.0 661.7 315.9 657.0 311.0 C652.3 306.1 646.7 302.1 641.0 298.5 C635.3 294.9 629.0 291.8 623.0 289.5 C617.0 287.2 608.0 285.8 605.0 285.0 L585 285z"/></clipPath>
<g clip-path="url(#cF)"><path d="M598.0 186.0 C603.3 186.3 621.2 185.8 630.0 188.0 C638.8 190.2 644.5 193.3 651.0 199.0 C657.5 204.7 663.8 213.5 669.0 222.0 C674.2 230.5 678.7 240.3 682.0 250.0 C685.3 259.7 687.4 269.2 689.0 280.0 C690.6 290.8 691.2 301.7 691.5 315.0 C691.8 328.3 691.1 352.5 691.0 360.0" fill="none" stroke="#bcbcbc" stroke-width="20" filter="url(#b6)" opacity=".75"/></g>
<ellipse cx="639.800" cy="360.900" rx="34" ry="48" fill="#b6b6b6" filter="url(#b05)"/>
<path d="M645.3 357.9 L645.6 358.2 L645.9 358.5 L646.2 358.9 L646.4 359.4 L646.5 359.9 L646.7 360.4 L646.8 361.0 L646.8 361.6 L646.7 362.2 L646.6 362.9 L646.5 363.5 L646.2 364.1 L645.9 364.8 L645.5 365.3 L645.1 365.9 L644.6 366.4 L644.0 366.8 L643.4 367.1 L642.7 367.4 L642.0 367.6 L641.3 367.7 L640.6 367.7 L639.8 367.6 L639.0 367.4 L638.3 367.1 L637.5 366.6 L636.8 366.1 L636.1 365.4 L635.5 364.7 L635.0 363.9 L634.5 362.9 L634.1 361.9 L633.7 360.9 L633.5 359.7 L633.4 358.6 L633.4 357.3 L633.5 356.1 L633.7 354.9 L634.0 353.7 L634.5 352.5 L635.0 351.4 L635.7 350.3 L636.5 349.4 L637.4 348.5 L638.3 347.7 L639.4 347.0 L640.5 346.5 L641.7 346.1 L642.9 345.9 L644.1 345.8 L645.4 345.9 L646.7 346.1 L647.9 346.6 L649.2 347.2 L650.3 347.9 L651.5 348.9 L652.5 349.9 L653.5 351.2 L654.3 352.5 L655.0 354.0 L655.6 355.6 L656.1 357.3 L656.4 359.0 L656.5 360.8 L656.5 362.7 L656.4 364.5 L656.0 366.3 L655.5 368.1 L654.8 369.9 L654.0 371.5 L653.0 373.1 L651.8 374.5 L650.5 375.8 L649.1 376.9 L647.6 377.8 L646.0 378.6 L644.3 379.1 L642.6 379.5 L640.8 379.6 L639.0 379.4 L637.2 379.1 L635.5 378.5 L633.7 377.6 L632.1 376.6 L630.5 375.3 L629.1 373.8 L627.8 372.1 L626.6 370.3 L625.6 368.2 L624.8 366.1 L624.1 363.8 L623.7 361.4 L623.5 359.0 L623.5 356.6 L623.7 354.1 L624.2 351.6 L624.8 349.3 L625.7 346.9 L626.8 344.7 L628.1 342.7 L629.6 340.8 L631.3 339.1 L633.1 337.5 L635.1 336.3 L637.2 335.3 L639.3 334.5 L641.6 334.1 L643.9 333.9 L646.2 334.0 L648.5 334.4 L650.8 335.2 L653.0 336.2 L655.1 337.5 L657.2 339.1 L659.0 341.0 L660.7 343.1 L662.3 345.4 L663.6 347.9 L664.7 350.6 L665.5 353.5 L666.1 356.4 L666.4 359.5 L666.5 362.6 L666.3 365.7 L665.8 368.7 L665.0 371.8 L663.9 374.7 L662.6 377.5 L661.0 380.1 L659.2 382.5 L657.2 384.7 L655.0 386.6 L652.6 388.2 L650.0 389.5 L647.4 390.5 L644.6 391.2 L641.8 391.5 L638.9 391.4 L636.1 391.0 L633.3 390.2" fill="none" stroke="#d3d3d3" stroke-width="7.5" stroke-linecap="round" stroke-linejoin="round" filter="url(#b1)"/>
<path d="M633.5 245 Q650 235.5 668 244.5 Q674 248.5 676.5 254" fill="none" stroke="#ededed" stroke-width="3" filter="url(#b1)"/>
<path d="M635.600 250.200 Q645 246.500 655 247.500 Q668 251 675.500 257.500 Q666 262.500 656 261.700 Q645 259 635.600 250.200z" fill="#a4a4a4" filter="url(#b05)"/>
<circle cx="661.700" cy="251.300" r="7.300" fill="#e2e2e2" filter="url(#b05)"/>
<circle cx="662" cy="252" r="4.500" fill="none" stroke="#d4d4d4" stroke-width="1.500" filter="url(#b05)"/>
<path d="M651 214 l8 -3.500 M657 221 l7 -3" stroke="#ececec" stroke-width="3.500" filter="url(#b1)" stroke-linecap="round" opacity=".8"/>
<path d="M605 520 L630 520 Q650 512 662 500 Q676 484 690 472 Q702 460 711 459 Q716 462 712 470 Q700 484 694 496 Q692 505 697 509.500 L734 509.500 Q741 511 741 516.500 Q741 522.500 734 523.500 L696 524 Q691 526 691 530 Q691 535 696 536.500 L735 536.500 Q742 538 742 543 Q742 548 735 549.500 L696 550 Q691 552 691 556 Q691 561 696 562 L734 562 Q741 563.500 741 568.500 Q741 574 734 575 L697 575.500 Q692 577 692 581 Q692 585.500 697 586.500 L735 587 Q741 588 741 592.500 Q741 597.500 735 598.500 L705 598 Q688 595 670 588 Q640 578 605 580z" fill="#c8c8c8" filter="url(#b1)"/>
<path d="M605 520 L630 520 Q650 512 662 500 Q676 484 690 472 Q702 460 711 459 Q716 462 712 470 Q700 484 694 496 Q692 505 697 509.500 L734 509.500 Q741 511 741 516.500 Q741 522.500 734 523.500 L696 524 Q691 526 691 530 Q691 535 696 536.500 L735 536.500 Q742 538 742 543 Q742 548 735 549.500 L696 550 Q691 552 691 556 Q691 561 696 562 L734 562 Q741 563.500 741 568.500 Q741 574 734 575 L697 575.500 Q692 577 692 581 Q692 585.500 697 586.500 L735 587 Q741 588 741 592.500 Q741 597.500 735 598.500 L705 598 Q688 595 670 588 Q640 578 605 580z" fill="#f6f6f6" filter="url(#b05)"/>
<clipPath id="cH"><path d="M605 520 L630 520 Q650 512 662 500 Q676 484 690 472 Q702 460 711 459 Q716 462 712 470 Q700 484 694 496 Q692 505 697 509.500 L734 509.500 Q741 511 741 516.500 Q741 522.500 734 523.500 L696 524 Q691 526 691 530 Q691 535 696 536.500 L735 536.500 Q742 538 742 543 Q742 548 735 549.500 L696 550 Q691 552 691 556 Q691 561 696 562 L734 562 Q741 563.500 741 568.500 Q741 574 734 575 L697 575.500 Q692 577 692 581 Q692 585.500 697 586.500 L735 587 Q741 588 741 592.500 Q741 597.500 735 598.500 L705 598 Q688 595 670 588 Q640 578 605 580z"/></clipPath>
<g clip-path="url(#cH)"><path d="M605 520 L630 520 Q650 512 662 500 Q676 484 690 472 Q702 460 711 459 Q716 462 712 470 Q700 484 694 496 Q692 505 697 509.500 L734 509.500 Q741 511 741 516.500 Q741 522.500 734 523.500 L696 524 Q691 526 691 530 Q691 535 696 536.500 L735 536.500 Q742 538 742 543 Q742 548 735 549.500 L696 550 Q691 552 691 556 Q691 561 696 562 L734 562 Q741 563.500 741 568.500 Q741 574 734 575 L697 575.500 Q692 577 692 581 Q692 585.500 697 586.500 L735 587 Q741 588 741 592.500 Q741 597.500 735 598.500 L705 598 Q688 595 670 588 Q640 578 605 580z" fill="none" stroke="#b8b8b8" stroke-width="5" filter="url(#b2)"/></g>
<rect x="710.0" y="139" width="5.2" height="506" fill="url(#gBar)" opacity=".92"/>
<rect x="716.6" y="139" width="5.2" height="506" fill="url(#gBar)" opacity=".92"/>
<rect x="723.3" y="139" width="5.0" height="506" fill="url(#gBar)" opacity=".92"/>
<rect x="729.8" y="139" width="5.2" height="506" fill="url(#gBar)" opacity=".92"/>
<rect x="710" y="139" width="11.500" height="50" fill="url(#gBar)"/>
<rect x="723.500" y="139" width="11.500" height="50" fill="url(#gBar)"/>
<path d="M706 348.500 L745 348.500 L745 338 L730.200 317.600 L730.200 311 Q731 308.500 737 308.800 L756.600 324.600 L756.600 422 Q756 426.600 751 426.600 L707.800 426.600 Q703 426 703 420.500 Q703 415 707.800 414.300 L743.400 414.300 L743.400 405.500 L707 405.500 Q702.500 405 702.500 399 Q702.500 393 707 392.300 L743.400 392.300 L743.400 383.500 L706 383.500 Q701 383 701 377.300 Q701 371.800 706 371.200 L743.400 371.200 L743.400 360.700 L706 360.700 Q701.500 360 701.500 354.500 Q701.500 349 706 348.500z" fill="#bcbcbc" filter="url(#b1)"/>
<path d="M706 348.500 L745 348.500 L745 338 L730.200 317.600 L730.200 311 Q731 308.500 737 308.800 L756.600 324.600 L756.600 422 Q756 426.600 751 426.600 L707.800 426.600 Q703 426 703 420.500 Q703 415 707.800 414.300 L743.400 414.300 L743.400 405.500 L707 405.500 Q702.500 405 702.500 399 Q702.500 393 707 392.300 L743.400 392.300 L743.400 383.500 L706 383.500 Q701 383 701 377.300 Q701 371.800 706 371.200 L743.400 371.200 L743.400 360.700 L706 360.700 Q701.500 360 701.500 354.500 Q701.500 349 706 348.500z" fill="#f4f4f4" filter="url(#b05)"/>
<clipPath id="cU"><path d="M706 348.500 L745 348.500 L745 338 L730.200 317.600 L730.200 311 Q731 308.500 737 308.800 L756.600 324.600 L756.600 422 Q756 426.600 751 426.600 L707.800 426.600 Q703 426 703 420.500 Q703 415 707.800 414.300 L743.400 414.300 L743.400 405.500 L707 405.500 Q702.500 405 702.500 399 Q702.500 393 707 392.300 L743.400 392.300 L743.400 383.500 L706 383.500 Q701 383 701 377.300 Q701 371.800 706 371.200 L743.400 371.200 L743.400 360.700 L706 360.700 Q701.500 360 701.500 354.500 Q701.500 349 706 348.500z"/></clipPath>
<g clip-path="url(#cU)"><path d="M706 348.500 L745 348.500 L745 338 L730.200 317.600 L730.200 311 Q731 308.500 737 308.800 L756.600 324.600 L756.600 422 Q756 426.600 751 426.600 L707.800 426.600 Q703 426 703 420.500 Q703 415 707.800 414.300 L743.400 414.300 L743.400 405.500 L707 405.500 Q702.500 405 702.500 399 Q702.500 393 707 392.300 L743.400 392.300 L743.400 383.500 L706 383.500 Q701 383 701 377.300 Q701 371.800 706 371.200 L743.400 371.200 L743.400 360.700 L706 360.700 Q701.500 360 701.500 354.500 Q701.500 349 706 348.500z" fill="none" stroke="#c4c4c4" stroke-width="3" filter="url(#b1)"/></g>
<rect x="710.0" y="349" width="5.2" height="78" fill="#d0d0d0" opacity=".28"/>
<rect x="710.0" y="509" width="5.2" height="90" fill="#c4c4c4" opacity=".5"/>
<rect x="716.6" y="349" width="5.2" height="78" fill="#d0d0d0" opacity=".28"/>
<rect x="716.6" y="509" width="5.2" height="90" fill="#c4c4c4" opacity=".5"/>
<rect x="723.3" y="349" width="5.0" height="78" fill="#d0d0d0" opacity=".28"/>
<rect x="723.3" y="509" width="5.0" height="90" fill="#c4c4c4" opacity=".5"/>
<rect x="729.8" y="349" width="5.2" height="78" fill="#d0d0d0" opacity=".28"/>
<rect x="729.8" y="509" width="5.2" height="90" fill="#c4c4c4" opacity=".5"/>
<rect x="692" y="193.500" width="58" height="12" fill="#b3b3b3"/>
<circle cx="720.500" cy="198.800" r="19.500" fill="#b5b5b5"/>
<circle cx="720.500" cy="198.800" r="8" fill="none" stroke="#dadada" stroke-width="5" filter="url(#b05)"/>
<ellipse cx="691.800" cy="199.500" rx="4" ry="12.500" fill="#dedede" filter="url(#b05)"/>
<ellipse cx="749.800" cy="199.500" rx="4" ry="12.500" fill="#dedede" filter="url(#b05)"/>
</g>
</svg>
<!-- WINDOW CONTROLS -->
<svg style="left:1245px;top:10px" width="11" height="2"><rect width="10" height="1" y="0" fill="#111"/></svg>
<svg style="left:1289px;top:5px" width="12" height="12"><path d="M0.5 2.5h8v8h-8z M2.5 2.5v-2h8v8h-2" fill="none" stroke="#111" stroke-width="1"/></svg>
<svg style="left:1336px;top:5px" width="11" height="11"><path d="M0.5 0.5l10 10M10.5 0.5l-10 10" stroke="#111" stroke-width="1.1" fill="none"/></svg>
<!-- MDI controls -->
<div class="a" style="left:1310px;top:24px;width:17px;height:17px;border:1px solid #ececec;background:#fff"></div>
<div class="a" style="left:1328px;top:24px;width:17px;height:17px;border:1px solid #ececec;background:#fff"></div>
<div class="a" style="left:1347px;top:24px;width:17px;height:17px;border:1px solid #ececec;background:#fff"></div>
<svg style="left:1315px;top:34px" width="7" height="3"><rect width="6" height="2" fill="#8a8a8a"/></svg>
<svg style="left:1332px;top:28px" width="10" height="9"><path d="M0.5 4.5h5v3h-5z M2.5 3.5v-2h5v3h-1" fill="none" stroke="#8a8a8a" stroke-width="1.2"/></svg>
<svg style="left:1352px;top:29px" width="8" height="8"><path d="M0.7 0.7l6 6M6.7 0.7l-6 6" stroke="#8a8a8a" stroke-width="1.7" fill="none"/></svg>
<!-- RIGHT PANEL -->
<div class="a" style="left:1093px;top:43px;width:1px;height:704px;background:#a0a0a0"></div>
<div class="rh" style="top:45px"><span>Vectors</span></div><div class="rb" style="top:46px"></div>
<div class="rh" style="top:172px"><span>Bitmaps</span></div><div class="rb" style="top:173px"></div>
<div class="rh" style="top:203px"><span>Reliefs</span></div><div class="rb" style="top:204px"></div>
<svg style="left:1329px;top:48px" width="9" height="9"><path d="M4.500 1.200L8 8H1z" fill="#3c4648"/></svg>
<svg style="left:1329px;top:175px" width="9" height="9"><path d="M4.500 7.800L8 1H1z" fill="#3c4648"/></svg>
<svg style="left:1329px;top:206px" width="9" height="9"><path d="M4.500 1.200L8 8H1z" fill="#3c4648"/></svg>
<!-- combos -->
<div class="a" style="left:1103px;top:62px;width:239px;height:21px;background:#fff;border-top:1.5px solid #707070;border-left:1.5px solid #707070;border-right:1px solid #e8e8e8;border-bottom:1px solid #f4f4f4"></div>
<div class="a" style="left:1326px;top:63px;width:16px;height:20px;background:#f0f0f0;border-right:1.5px solid #686868;border-bottom:1.5px solid #686868;border-left:1px solid #fbfbfb;border-top:1px solid #fbfbfb"></div>
<svg style="left:1330px;top:71px" width="8" height="5"><path d="M0 0h7.400l-3.700 4.200z" fill="#000"/></svg>
<div class="t" style="left:1105px;top:64px">Default Sheet</div>
<div class="a" style="left:1103px;top:220px;width:239px;height:21px;background:#fff;border-top:1.5px solid #707070;border-left:1.5px solid #707070;border-right:1px solid #e8e8e8;border-bottom:1px solid #f4f4f4"></div>
<div class="a" style="left:1326px;top:221px;width:16px;height:20px;background:#f0f0f0;border-right:1.5px solid #686868;border-bottom:1.5px solid #686868;border-left:1px solid #fbfbfb;border-top:1px solid #fbfbfb"></div>
<svg style="left:1330px;top:229px" width="8" height="5"><path d="M0 0h7.400l-3.700 4.200z" fill="#000"/></svg>
<div class="t" style="left:1105px;top:222px">Front Relief</div>
<!-- layer rows -->
<div class="a" style="left:1102px;top:112px;width:243px;height:26px;background:#d8d8d8"></div>
<div class="a" style="left:1106px;top:117px;width:17px;height:17px;background:#ececec;border:1px solid #f8f8f8"></div>
<div class="a" style="left:1108px;top:119px;width:13px;height:13px;border-radius:50%;background:#000"></div>
<div class="t" style="left:1128px;top:119px">Default Layer</div>
<div class="a" style="left:1102px;top:270px;width:243px;height:26px;background:#d8d8d8"></div>
<svg style="left:1139px;top:279px" width="5" height="9"><path d="M0 0l4.5 4.5L0 9z" fill="#111"/></svg>
<div class="t" style="left:1149px;top:277px">Relief Layer 1</div>
<!-- bottom tabs right -->
<div class="a" style="left:1094px;top:721px;width:272px;height:1px;background:#a0a0a0"></div>
<svg style="left:1191px;top:722px" width="175" height="24"><rect width="175" height="24" filter="url(#nz2)"/><defs><filter id="nz2" x="0" y="0" width="100%" height="100%" color-interpolation-filters="sRGB"><feTurbulence type="fractalNoise" baseFrequency="0.28" numOctaves="2" seed="11"/><feColorMatrix type="matrix" values="0.34 0 0 0 0.68  0.34 0 0 0 0.68  0.34 0 0 0 0.68  0 0 0 0 1"/></filter></defs></svg>
<div class="a" style="left:1094px;top:721px;width:50px;height:25px;background:#f0f0f0;border-bottom:1px solid #a6a6a6;border-right:1px solid #9a9a9a;border-radius:0 0 6px 6px"></div>
<div class="a" style="left:1144px;top:722px;width:48px;height:24px;background:#f5f5f5;border-bottom:1px solid #a6a6a6;border-right:1px solid #9a9a9a;border-left:1px solid #d8d8d8;border-radius:0 0 6px 6px"></div>
<div class="t" style="left:1103px;top:726px;letter-spacing:-0.5px">Layers</div>
<div class="t" style="left:1151px;top:727px">Add In</div>

<svg width="0" height="0"><defs>
<g id="iNew"><path d="M0 1h6l2 3 2-1 2 2v11H0z" fill="url(#gDoc)"/><path d="M3 16l9-1 2 1-10 1z" fill="#b8b8b8"/></g>
<g id="iFold"><path d="M1 2q0-1.500 1.500-1.500h4l1 1.500h5q1.500 0 1.500 1.500v3H1z" fill="#f4e326"/><path d="M0.500 12q-.8-.5 0-2l2-4q.6-1 2-1h10q1.500 0 1 1.500l-2 5q-.5 1-2 1z" fill="url(#gFold)"/><path d="M3 13l11-1 1 .8-11 1z" fill="#c0c0c0"/></g>
<g id="iSave"><path d="M0 0h14v12H1.500L0 10.500z" fill="url(#gFlop)"/><rect x="3" y=".8" width="8.500" height="5.500" fill="#e0e4ea"/><rect x="4" y="8" width="6.500" height="4" fill="#c3c7cf"/><rect x="5" y="8.700" width="2" height="2.800" fill="#1c4fb0"/><path d="M14 10l2.500-.5v1.500l-2.500 1z" fill="#b8c4d8"/></g>
<g id="iBrown"><path d="M1 0l2 1 2-1 2 1h3l4 9 2 5-3 1H2l1-2-2-2 1-2-1-2 1-2-1-2 1-2z" fill="#b8966c"/><path d="M6 3v11M9 6v8" stroke="#a07c50" stroke-width="1"/><path d="M4 16l10-1 3-1" stroke="#c4c4c4" stroke-width="1.500"/></g>
<g id="iBulbDoc"><path d="M0 0h8l4 3v14H0z" fill="#8a9ab8"/><path d="M8 0l4 3H8z" fill="#dfe6f2"/><circle cx="6" cy="8" r="4.300" fill="url(#gBulb)"/><path d="M4.500 11.500h3v3h-3z" fill="#7a6020"/><path d="M4 6q1-2 3-2" stroke="#fff" stroke-width="1" fill="none"/></g>
<g id="iBucket"><path d="M0.500 3l1.200 9q3.300 2 6.600 0L9.500 3z" fill="#4a86e0"/><ellipse cx="5" cy="3" rx="4.600" ry="2" fill="#9cc4f4" stroke="#3a70c8" stroke-width=".8"/><path d="M2 5l.8 7" stroke="#8ab8f0" stroke-width="1.200"/></g>
<g id="iBulbs"><rect x="0" y="0" width="19" height="17" fill="#fbf3dc" stroke="#e4dcc4" stroke-width="1"/><circle cx="6.500" cy="7.500" r="4.600" fill="url(#gBulb)"/><path d="M5 11.500h3.200v3.500H5z" fill="#3a2a10"/><circle cx="13" cy="6" r="4.600" fill="url(#gBulb)"/><path d="M11.500 10h3.200v3.500h-3.200z" fill="#3a2a10"/><path d="M4 5q1-2 3-2M10.500 3.500q1-2 3-2" stroke="#fff" stroke-width="1" fill="none"/></g>
<g id="iBulb1"><circle cx="8.500" cy="7" r="4.800" fill="url(#gBulb)"/><path d="M6.800 11h3.400v3.800H6.800z" fill="#8a6a1c"/><path d="M6 5q1-2.500 3.500-2.500" stroke="#fff" stroke-width="1.100" fill="none"/></g>
<g id="iUD"><rect x="0" y="0" width="12" height="12" rx="1.200" fill="#1a479a"/><rect x="18" y="0" width="12" height="12" rx="1.200" fill="#1a479a"/><path d="M6 10.500V3.500M2.600 6.300L6 2.800l3.400 3.500" stroke="#fff" stroke-width="1.900" fill="none"/><path d="M24 1.500v7M20.600 5.700L24 9.200l3.400-3.500" stroke="#fff" stroke-width="1.900" fill="none"/></g>
</defs></svg>
<!-- vectors icon row -->
<svg style="left:1103px;top:90px" width="16" height="18"><g><path d="M0 1h6l2 3 2-1 2 2v11H0z" fill="url(#gDoc)"/><path d="M3 16l9-1 2 1-10 1z" fill="#b8b8b8"/></g></svg>
<svg style="left:1139px;top:92px" width="18" height="14"><g><path d="M1 2q0-1.500 1.500-1.500h4l1 1.500h5q1.500 0 1.500 1.500v3H1z" fill="#f4e326"/><path d="M0.500 12q-.8-.5 0-2l2-4q.6-1 2-1h10q1.500 0 1 1.500l-2 5q-.5 1-2 1z" fill="url(#gFold)"/><path d="M3 13l11-1 1 .8-11 1z" fill="#c0c0c0"/></g></svg>
<svg style="left:1176px;top:92px" width="18" height="14"><g><path d="M0 0h14v12H1.500L0 10.500z" fill="url(#gFlop)"/><rect x="3" y=".8" width="8.500" height="5.500" fill="#e0e4ea"/><rect x="4" y="8" width="6.500" height="4" fill="#c3c7cf"/><rect x="5" y="8.700" width="2" height="2.800" fill="#1c4fb0"/><path d="M14 10l2.500-.5v1.500l-2.500 1z" fill="#b8c4d8"/></g></svg>
<svg style="left:1212px;top:90px" width="18" height="18"><g><path d="M1 0l2 1 2-1 2 1h3l4 9 2 5-3 1H2l1-2-2-2 1-2-1-2 1-2-1-2 1-2z" fill="#b8966c"/><path d="M6 3v11M9 6v8" stroke="#a07c50" stroke-width="1"/><path d="M4 16l10-1 3-1" stroke="#c4c4c4" stroke-width="1.500"/></g></svg>
<svg style="left:1252px;top:90px" width="14" height="18"><g><path d="M0 0h8l4 3v14H0z" fill="#8a9ab8"/><path d="M8 0l4 3H8z" fill="#dfe6f2"/><circle cx="6" cy="8" r="4.300" fill="url(#gBulb)"/><path d="M4.500 11.500h3v3h-3z" fill="#7a6020"/><path d="M4 6q1-2 3-2" stroke="#fff" stroke-width="1" fill="none"/></g></svg>
<svg style="left:1290px;top:92px" width="12" height="14"><g><path d="M0.500 3l1.200 9q3.300 2 6.600 0L9.500 3z" fill="#4a86e0"/><ellipse cx="5" cy="3" rx="4.600" ry="2" fill="#9cc4f4" stroke="#3a70c8" stroke-width=".8"/><path d="M2 5l.8 7" stroke="#8ab8f0" stroke-width="1.200"/></g></svg>
<svg style="left:1322px;top:90px" width="20" height="18"><g><rect x="0" y="0" width="19" height="17" fill="#fbf3dc" stroke="#e4dcc4" stroke-width="1"/><circle cx="6.500" cy="7.500" r="4.600" fill="url(#gBulb)"/><path d="M5 11.500h3.200v3.500H5z" fill="#3a2a10"/><circle cx="13" cy="6" r="4.600" fill="url(#gBulb)"/><path d="M11.500 10h3.200v3.500h-3.200z" fill="#3a2a10"/><path d="M4 5q1-2 3-2M10.500 3.500q1-2 3-2" stroke="#fff" stroke-width="1" fill="none"/></g></svg>
<!-- default layer row icons -->
<div class="a" style="left:1287px;top:117px;width:17px;height:17px;background:#c8c8c8;border-top:1px solid #f4f4f4;border-left:1px solid #f4f4f4;border-right:1px solid #8a8a8a;border-bottom:1px solid #8a8a8a"></div>
<svg style="left:1289px;top:118px" width="14" height="15"><path d="M3.500 8V5q0-3.500 3.500-3.500T10.500 5v1" fill="none" stroke="#f0f0f0" stroke-width="1.800"/><rect x="2" y="7" width="10" height="7.500" fill="#9c9c9c" stroke="#b8b8b8" stroke-width=".8"/><path d="M8 14V9.500M6 11l2-2.200 2 2.200" stroke="#0a0a0a" stroke-width="1.500" fill="none"/></svg>
<div class="a" style="left:1305px;top:117px;width:17px;height:17px;background:#e0e0e0"></div>
<svg style="left:1305px;top:117px" width="18" height="18"><path d="M2.500 1v15.500H17" fill="none" stroke="#111" stroke-width="1.200" stroke-dasharray="2.500 1.500"/><path d="M15 2.500L6.500 11" stroke="#0a0a0a" stroke-width="2.600"/><path d="M4.500 13.500l1-5.500 4.500 4.500z" fill="#0a0a0a"/></svg>
<div class="a" style="left:1323px;top:117px;width:17px;height:17px;background:#d2d2d2;border:1px solid #e8e8e8"></div>
<svg style="left:1323px;top:117px" width="17" height="17"><g><circle cx="8.500" cy="7" r="4.800" fill="url(#gBulb)"/><path d="M6.800 11h3.400v3.800H6.800z" fill="#8a6a1c"/><path d="M6 5q1-2.500 3.500-2.500" stroke="#fff" stroke-width="1.100" fill="none"/></g></svg>
<svg style="left:1312px;top:141px" width="31" height="12"><g><rect x="0" y="0" width="12" height="12" rx="1.200" fill="#1a479a"/><rect x="18" y="0" width="12" height="12" rx="1.200" fill="#1a479a"/><path d="M6 10.500V3.500M2.600 6.300L6 2.800l3.400 3.500" stroke="#fff" stroke-width="1.900" fill="none"/><path d="M24 1.500v7M20.600 5.700L24 9.200l3.400-3.500" stroke="#fff" stroke-width="1.900" fill="none"/></g></svg>
<!-- reliefs icon row -->
<svg style="left:1103px;top:248px" width="16" height="18"><g><path d="M0 1h6l2 3 2-1 2 2v11H0z" fill="url(#gDoc)"/><path d="M3 16l9-1 2 1-10 1z" fill="#b8b8b8"/></g></svg>
<svg style="left:1129px;top:250px" width="18" height="14"><g><path d="M1 2q0-1.500 1.500-1.500h4l1 1.500h5q1.500 0 1.500 1.500v3H1z" fill="#f4e326"/><path d="M0.500 12q-.8-.5 0-2l2-4q.6-1 2-1h10q1.500 0 1 1.500l-2 5q-.5 1-2 1z" fill="url(#gFold)"/><path d="M3 13l11-1 1 .8-11 1z" fill="#c0c0c0"/></g></svg>
<svg style="left:1157px;top:250px" width="18" height="14"><g><path d="M0 0h14v12H1.500L0 10.500z" fill="url(#gFlop)"/><rect x="3" y=".8" width="8.500" height="5.500" fill="#e0e4ea"/><rect x="4" y="8" width="6.500" height="4" fill="#c3c7cf"/><rect x="5" y="8.700" width="2" height="2.800" fill="#1c4fb0"/><path d="M14 10l2.500-.5v1.500l-2.500 1z" fill="#b8c4d8"/></g></svg>
<svg style="left:1185px;top:248px" width="18" height="18"><g><path d="M1 0l2 1 2-1 2 1h3l4 9 2 5-3 1H2l1-2-2-2 1-2-1-2 1-2-1-2 1-2z" fill="#b8966c"/><path d="M6 3v11M9 6v8" stroke="#a07c50" stroke-width="1"/><path d="M4 16l10-1 3-1" stroke="#c4c4c4" stroke-width="1.500"/></g></svg>
<svg style="left:1212px;top:248px" width="20" height="18"><path d="M1 11l9-4 9 4-9 5z" fill="#b01818"/><path d="M1 11l9 5v1.500l-9-5z" fill="#801010"/><path d="M10 16l9-5v1.500l-9 5z" fill="#981414"/><path d="M10 6v7M7 10.500l3 3 3-3" stroke="#f4c020" stroke-width="2" fill="none"/><path d="M2 5l8-4 9 3.500-9 4.500z" fill="#8a94e0" opacity=".92"/><path d="M2 5l8 4v1l-8-4z" fill="#5a64b8"/></svg>
<svg style="left:1242px;top:248px" width="14" height="18"><g><path d="M0 0h8l4 3v14H0z" fill="#8a9ab8"/><path d="M8 0l4 3H8z" fill="#dfe6f2"/><circle cx="6" cy="8" r="4.300" fill="url(#gBulb)"/><path d="M4.500 11.500h3v3h-3z" fill="#7a6020"/><path d="M4 6q1-2 3-2" stroke="#fff" stroke-width="1" fill="none"/></g></svg>
<svg style="left:1270px;top:250px" width="15" height="14"><rect width="14" height="13.500" fill="#060606"/><circle cx="4.500" cy="3" r="1.400" fill="#999"/><circle cx="9" cy="3" r="1.400" fill="#999"/><circle cx="6.800" cy="4.500" r="2.500" fill="#b8b8b8"/><ellipse cx="6.800" cy="9" rx="4" ry="3.600" fill="#c4c4c4"/><ellipse cx="6.800" cy="9.300" rx="2" ry="2.200" fill="#8a8a8a"/><path d="M11 3h2.500M12.200 3v3" stroke="#eee" stroke-width=".9"/><path d="M2 6l2 1.500M11.500 6l-2 1.500" stroke="#bbb" stroke-width="1.300"/></svg>
<svg style="left:1299px;top:250px" width="12" height="14"><g><path d="M0.500 3l1.200 9q3.300 2 6.600 0L9.500 3z" fill="#4a86e0"/><ellipse cx="5" cy="3" rx="4.600" ry="2" fill="#9cc4f4" stroke="#3a70c8" stroke-width=".8"/><path d="M2 5l.8 7" stroke="#8ab8f0" stroke-width="1.200"/></g></svg>
<svg style="left:1322px;top:248px" width="20" height="18"><g><rect x="0" y="0" width="19" height="17" fill="#fbf3dc" stroke="#e4dcc4" stroke-width="1"/><circle cx="6.500" cy="7.500" r="4.600" fill="url(#gBulb)"/><path d="M5 11.500h3.200v3.500H5z" fill="#3a2a10"/><circle cx="13" cy="6" r="4.600" fill="url(#gBulb)"/><path d="M11.500 10h3.200v3.500h-3.200z" fill="#3a2a10"/><path d="M4 5q1-2 3-2M10.500 3.500q1-2 3-2" stroke="#fff" stroke-width="1" fill="none"/></g></svg>
<!-- relief layer row -->
<svg style="left:1110px;top:273px" width="24" height="22"><path d="M4 14q0-12 11-12q7 1 7.500 10l-5 4q0-8-5-8q-5 1-5.500 7z" fill="#d8c088"/><path d="M4 14q0-12 11-12q4 .5 6 4q-3-2-7-1.500q-8 1.500-7 10z" fill="#f0e0b0"/><path d="M7 15q.5-6.500 5.500-7q5 0 5 8z" fill="#7a84c8"/><path d="M1 17.500h8M5 13.500v8" stroke="#0a0a0a" stroke-width="1.300"/></svg>
<div class="a" style="left:1323px;top:274px;width:17px;height:17px;background:#d2d2d2;border:1px solid #e8e8e8"></div>
<svg style="left:1323px;top:274px" width="17" height="17"><g><circle cx="8.500" cy="7" r="4.800" fill="url(#gBulb)"/><path d="M6.800 11h3.400v3.800H6.800z" fill="#8a6a1c"/><path d="M6 5q1-2.500 3.500-2.500" stroke="#fff" stroke-width="1.100" fill="none"/></g></svg>
<svg style="left:1312px;top:299px" width="31" height="12"><g><rect x="0" y="0" width="12" height="12" rx="1.200" fill="#1a479a"/><rect x="18" y="0" width="12" height="12" rx="1.200" fill="#1a479a"/><path d="M6 10.500V3.500M2.600 6.300L6 2.800l3.400 3.500" stroke="#fff" stroke-width="1.900" fill="none"/><path d="M24 1.500v7M20.600 5.700L24 9.200l3.400-3.500" stroke="#fff" stroke-width="1.900" fill="none"/></g></svg>
<!-- left bottom tabs -->
<svg width="0" height="0"><defs><filter id="nz" x="0" y="0" width="100%" height="100%" color-interpolation-filters="sRGB"><feTurbulence type="fractalNoise" baseFrequency="0.28" numOctaves="2" seed="7"/><feColorMatrix type="matrix" values="0.34 0 0 0 0.68  0.34 0 0 0 0.68  0.34 0 0 0 0.68  0 0 0 0 1"/></filter></defs></svg>
<div class="a" style="left:0;top:721px;width:270px;height:1px;background:#c4c4c4"></div>
<svg style="left:128px;top:722px" width="142" height="24"><rect width="142" height="24" filter="url(#nz)"/></svg>
<div class="a" style="left:0;top:721px;width:62px;height:25px;background:#f0f0f0;border-bottom:1px solid #a6a6a6;border-right:1px solid #9a9a9a;border-radius:0 0 6px 6px"></div>
<div class="a" style="left:62px;top:722px;width:67px;height:24px;background:#f5f5f5;border-bottom:1px solid #a6a6a6;border-right:1px solid #9a9a9a;border-left:1px solid #d8d8d8;border-top:1px solid #d0d0d0;border-radius:0 0 6px 6px"></div>
<div class="t" style="left:8px;top:726px;letter-spacing:-0.15px">Assistant</div>
<div class="t" style="left:70.500px;top:727px;letter-spacing:0.25px">Toolpaths</div>

<!-- STATUS BAR -->
<div class="a" style="left:0;top:747px;width:1366px;height:21px;background:#f0f0f0"></div>
<div class="a" style="left:0;top:747px;width:277px;height:1px;background:#b0b0b0"></div><div class="a" style="left:0;top:748px;width:277px;height:1px;background:#fafafa"></div><div class="a" style="left:1090px;top:747px;width:276px;height:1px;background:#b0b0b0"></div><div class="a" style="left:1090px;top:748px;width:276px;height:1px;background:#fafafa"></div>
<div class="a" style="left:1023px;top:751px;width:64px;height:17px;border-top:1px solid #a0a0a0;border-left:1px solid #a0a0a0;border-right:1px solid #fff"></div>
<div class="a" style="left:1092px;top:751px;width:66px;height:17px;border-top:1px solid #a0a0a0;border-left:1px solid #a0a0a0;border-right:1px solid #fff"></div>
<div class="a" style="left:1161px;top:751px;width:60px;height:17px;border-top:1px solid #a0a0a0;border-left:1px solid #a0a0a0;border-right:1px solid #fff"></div>
<div class="a" style="left:1224px;top:751px;width:70px;height:17px;border-top:1px solid #a0a0a0;border-left:1px solid #a0a0a0;border-right:1px solid #fff"></div>
<div class="a" style="left:1297px;top:751px;width:70px;height:17px;border-top:1px solid #a0a0a0;border-left:1px solid #a0a0a0"></div>
<div class="t" style="left:1025px;top:753px;letter-spacing:-0.4px">X: 1100.849</div>
<div class="t" style="left:1095px;top:753px;letter-spacing:-0.5px">Y: -506.350</div>
</div></body></html>
